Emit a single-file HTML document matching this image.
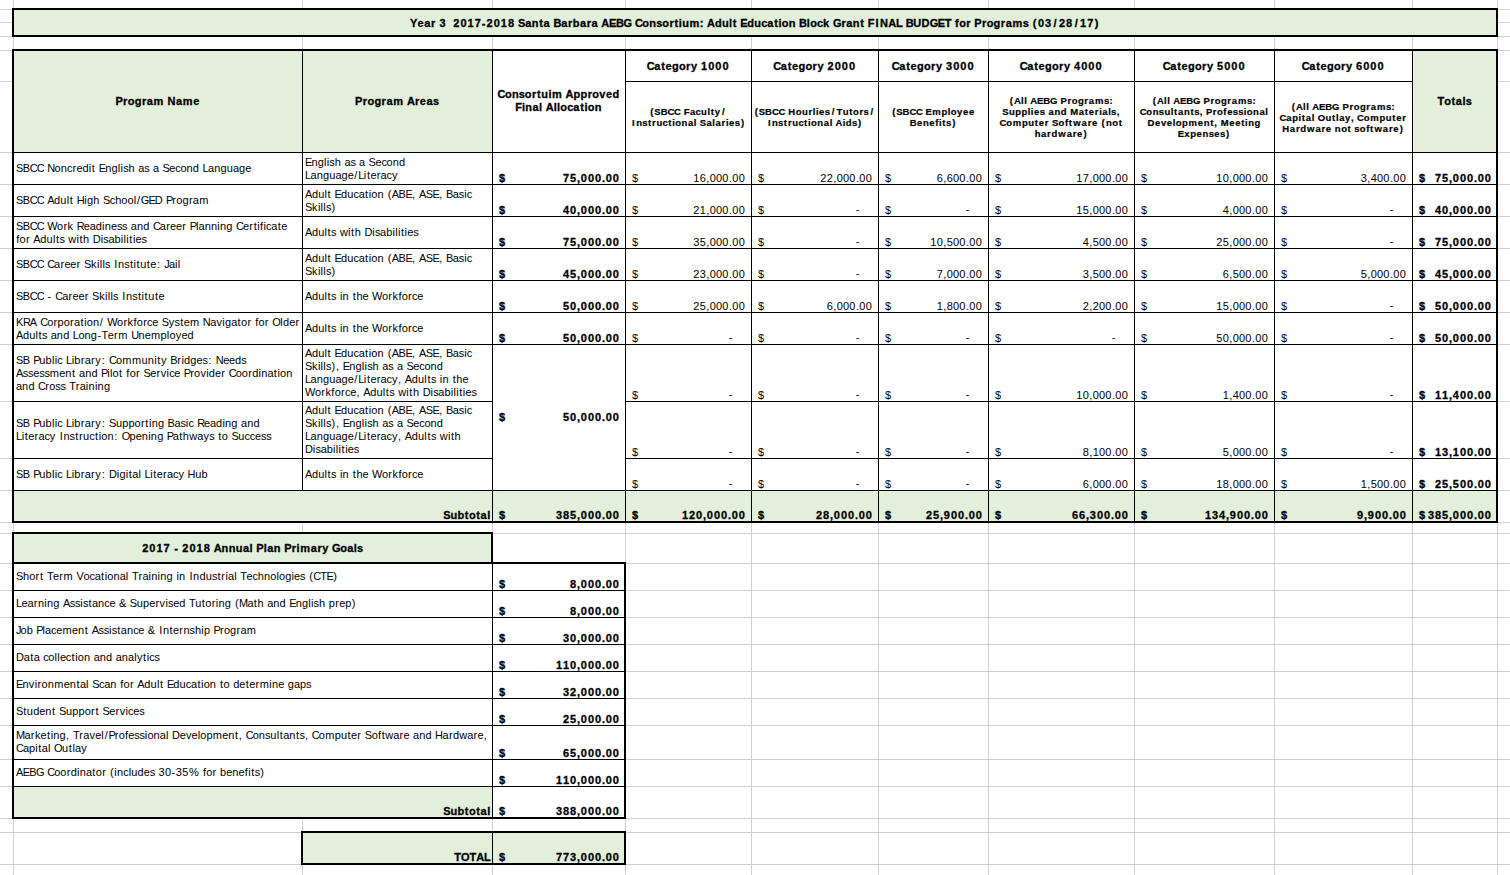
<!DOCTYPE html>
<html><head><meta charset="utf-8"><title>AEBG Budget</title>
<style>
html,body{margin:0;padding:0;background:#fff;}
body{width:1510px;height:875px;position:relative;overflow:hidden;font-family:"Liberation Sans",sans-serif;color:#000;}
body>div{position:absolute;white-space:pre;}
i{display:inline-block;text-align:center;font-style:normal}
</style></head><body>
<div style="left:13px;top:0px;width:1px;height:875px;background:#d0d0d0"></div>
<div style="left:302px;top:0px;width:1px;height:875px;background:#d0d0d0"></div>
<div style="left:492px;top:0px;width:1px;height:875px;background:#d0d0d0"></div>
<div style="left:625px;top:0px;width:1px;height:875px;background:#d0d0d0"></div>
<div style="left:751px;top:0px;width:1px;height:875px;background:#d0d0d0"></div>
<div style="left:878px;top:0px;width:1px;height:875px;background:#d0d0d0"></div>
<div style="left:988px;top:0px;width:1px;height:875px;background:#d0d0d0"></div>
<div style="left:1134px;top:0px;width:1px;height:875px;background:#d0d0d0"></div>
<div style="left:1274px;top:0px;width:1px;height:875px;background:#d0d0d0"></div>
<div style="left:1412px;top:0px;width:1px;height:875px;background:#d0d0d0"></div>
<div style="left:1497px;top:0px;width:1px;height:875px;background:#d0d0d0"></div>
<div style="left:0px;top:9px;width:1510px;height:1px;background:#d0d0d0"></div>
<div style="left:0px;top:22px;width:1510px;height:1px;background:#d0d0d0"></div>
<div style="left:0px;top:36px;width:1510px;height:1px;background:#d0d0d0"></div>
<div style="left:0px;top:50px;width:1510px;height:1px;background:#d0d0d0"></div>
<div style="left:0px;top:81px;width:1510px;height:1px;background:#d0d0d0"></div>
<div style="left:0px;top:152px;width:1510px;height:1px;background:#d0d0d0"></div>
<div style="left:0px;top:184px;width:1510px;height:1px;background:#d0d0d0"></div>
<div style="left:0px;top:216px;width:1510px;height:1px;background:#d0d0d0"></div>
<div style="left:0px;top:248px;width:1510px;height:1px;background:#d0d0d0"></div>
<div style="left:0px;top:280px;width:1510px;height:1px;background:#d0d0d0"></div>
<div style="left:0px;top:312px;width:1510px;height:1px;background:#d0d0d0"></div>
<div style="left:0px;top:344px;width:1510px;height:1px;background:#d0d0d0"></div>
<div style="left:0px;top:401px;width:1510px;height:1px;background:#d0d0d0"></div>
<div style="left:0px;top:458px;width:1510px;height:1px;background:#d0d0d0"></div>
<div style="left:0px;top:490px;width:1510px;height:1px;background:#d0d0d0"></div>
<div style="left:0px;top:522px;width:1510px;height:1px;background:#d0d0d0"></div>
<div style="left:0px;top:533px;width:1510px;height:1px;background:#d0d0d0"></div>
<div style="left:0px;top:563px;width:1510px;height:1px;background:#d0d0d0"></div>
<div style="left:0px;top:590px;width:1510px;height:1px;background:#d0d0d0"></div>
<div style="left:0px;top:617px;width:1510px;height:1px;background:#d0d0d0"></div>
<div style="left:0px;top:644px;width:1510px;height:1px;background:#d0d0d0"></div>
<div style="left:0px;top:671px;width:1510px;height:1px;background:#d0d0d0"></div>
<div style="left:0px;top:698px;width:1510px;height:1px;background:#d0d0d0"></div>
<div style="left:0px;top:725px;width:1510px;height:1px;background:#d0d0d0"></div>
<div style="left:0px;top:759px;width:1510px;height:1px;background:#d0d0d0"></div>
<div style="left:0px;top:786px;width:1510px;height:1px;background:#d0d0d0"></div>
<div style="left:0px;top:818px;width:1510px;height:1px;background:#d0d0d0"></div>
<div style="left:0px;top:832px;width:1510px;height:1px;background:#d0d0d0"></div>
<div style="left:0px;top:864px;width:1510px;height:1px;background:#d0d0d0"></div>
<div style="left:14px;top:10px;width:1483px;height:26px;background:#e2efda"></div>
<div style="left:14px;top:51px;width:288px;height:101px;background:#e2efda"></div>
<div style="left:303px;top:51px;width:189px;height:101px;background:#e2efda"></div>
<div style="left:493px;top:51px;width:132px;height:101px;background:#fff"></div>
<div style="left:1413px;top:51px;width:84px;height:101px;background:#e2efda"></div>
<div style="left:626px;top:51px;width:125px;height:30px;background:#fff"></div>
<div style="left:626px;top:82px;width:125px;height:70px;background:#fff"></div>
<div style="left:752px;top:51px;width:126px;height:30px;background:#fff"></div>
<div style="left:752px;top:82px;width:126px;height:70px;background:#fff"></div>
<div style="left:879px;top:51px;width:109px;height:30px;background:#fff"></div>
<div style="left:879px;top:82px;width:109px;height:70px;background:#fff"></div>
<div style="left:989px;top:51px;width:145px;height:30px;background:#fff"></div>
<div style="left:989px;top:82px;width:145px;height:70px;background:#fff"></div>
<div style="left:1135px;top:51px;width:139px;height:30px;background:#fff"></div>
<div style="left:1135px;top:82px;width:139px;height:70px;background:#fff"></div>
<div style="left:1275px;top:51px;width:137px;height:30px;background:#fff"></div>
<div style="left:1275px;top:82px;width:137px;height:70px;background:#fff"></div>
<div style="left:493px;top:345px;width:132px;height:145px;background:#fff"></div>
<div style="left:14px;top:491px;width:1483px;height:31px;background:#e2efda"></div>
<div style="left:14px;top:534px;width:478px;height:29px;background:#e2efda"></div>
<div style="left:14px;top:564px;width:478px;height:26px;background:#fff"></div>
<div style="left:14px;top:591px;width:478px;height:26px;background:#fff"></div>
<div style="left:14px;top:618px;width:478px;height:26px;background:#fff"></div>
<div style="left:14px;top:645px;width:478px;height:26px;background:#fff"></div>
<div style="left:14px;top:672px;width:478px;height:26px;background:#fff"></div>
<div style="left:14px;top:699px;width:478px;height:26px;background:#fff"></div>
<div style="left:14px;top:726px;width:478px;height:33px;background:#fff"></div>
<div style="left:14px;top:760px;width:478px;height:26px;background:#fff"></div>
<div style="left:14px;top:787px;width:478px;height:31px;background:#e2efda"></div>
<div style="left:303px;top:833px;width:322px;height:31px;background:#e2efda"></div>
<div style="left:625px;top:81px;width:788px;height:1px;background:#000"></div>
<div style="left:13px;top:152px;width:1485px;height:1px;background:#000"></div>
<div style="left:13px;top:184px;width:1485px;height:1px;background:#000"></div>
<div style="left:13px;top:216px;width:1485px;height:1px;background:#000"></div>
<div style="left:13px;top:248px;width:1485px;height:1px;background:#000"></div>
<div style="left:13px;top:280px;width:1485px;height:1px;background:#000"></div>
<div style="left:13px;top:312px;width:1485px;height:1px;background:#000"></div>
<div style="left:13px;top:344px;width:1485px;height:1px;background:#000"></div>
<div style="left:13px;top:401px;width:1485px;height:1px;background:#000"></div>
<div style="left:13px;top:458px;width:1485px;height:1px;background:#000"></div>
<div style="left:13px;top:490px;width:1485px;height:1px;background:#000"></div>
<div style="left:302px;top:50px;width:1px;height:441px;background:#000"></div>
<div style="left:492px;top:50px;width:1px;height:473px;background:#000"></div>
<div style="left:625px;top:50px;width:1px;height:473px;background:#000"></div>
<div style="left:751px;top:50px;width:1px;height:473px;background:#000"></div>
<div style="left:878px;top:50px;width:1px;height:473px;background:#000"></div>
<div style="left:988px;top:50px;width:1px;height:473px;background:#000"></div>
<div style="left:1134px;top:50px;width:1px;height:473px;background:#000"></div>
<div style="left:1274px;top:50px;width:1px;height:473px;background:#000"></div>
<div style="left:1412px;top:50px;width:1px;height:473px;background:#000"></div>
<div style="left:12px;top:49px;width:1486px;height:2px;background:#000"></div>
<div style="left:12px;top:521px;width:1486px;height:2px;background:#000"></div>
<div style="left:12px;top:49px;width:2px;height:474px;background:#000"></div>
<div style="left:1496px;top:49px;width:2px;height:474px;background:#000"></div>
<div style="left:12px;top:8px;width:1486px;height:2px;background:#000"></div>
<div style="left:12px;top:35px;width:1486px;height:2px;background:#000"></div>
<div style="left:12px;top:8px;width:2px;height:29px;background:#000"></div>
<div style="left:1496px;top:8px;width:2px;height:29px;background:#000"></div>
<div style="left:493px;top:401px;width:132px;height:1px;background:#fff"></div>
<div style="left:493px;top:458px;width:132px;height:1px;background:#fff"></div>
<div style="left:13px;top:590px;width:613px;height:1px;background:#000"></div>
<div style="left:13px;top:617px;width:613px;height:1px;background:#000"></div>
<div style="left:13px;top:644px;width:613px;height:1px;background:#000"></div>
<div style="left:13px;top:671px;width:613px;height:1px;background:#000"></div>
<div style="left:13px;top:698px;width:613px;height:1px;background:#000"></div>
<div style="left:13px;top:725px;width:613px;height:1px;background:#000"></div>
<div style="left:13px;top:759px;width:613px;height:1px;background:#000"></div>
<div style="left:13px;top:786px;width:613px;height:1px;background:#000"></div>
<div style="left:492px;top:563px;width:1px;height:256px;background:#000"></div>
<div style="left:12px;top:532px;width:481px;height:2px;background:#000"></div>
<div style="left:12px;top:562px;width:481px;height:2px;background:#000"></div>
<div style="left:12px;top:532px;width:2px;height:32px;background:#000"></div>
<div style="left:491px;top:532px;width:2px;height:32px;background:#000"></div>
<div style="left:12px;top:562px;width:614px;height:2px;background:#000"></div>
<div style="left:12px;top:817px;width:614px;height:2px;background:#000"></div>
<div style="left:12px;top:562px;width:2px;height:257px;background:#000"></div>
<div style="left:624px;top:562px;width:2px;height:257px;background:#000"></div>
<div style="left:492px;top:832px;width:1px;height:33px;background:#000"></div>
<div style="left:301px;top:831px;width:325px;height:2px;background:#000"></div>
<div style="left:301px;top:863px;width:325px;height:2px;background:#000"></div>
<div style="left:301px;top:831px;width:2px;height:34px;background:#000"></div>
<div style="left:624px;top:831px;width:2px;height:34px;background:#000"></div>
<div style="left:409.89px;top:17px;line-height:13px;font-weight:bold;font-size:11px;-webkit-text-stroke:0.3px #000"><i style="width:7.37px">Y</i><i style="width:6.64px">e</i><i style="width:6.68px">a</i><i style="width:4.97px">r</i><i style="width:3.42px"> </i><i style="width:7.11px">3</i><i style="width:3.42px"> </i><i style="width:3.42px"> </i><i style="width:7.11px">2</i><i style="width:7.11px">0</i><i style="width:7.11px">1</i><i style="width:7.11px">7</i><i style="width:4.80px">-</i><i style="width:7.11px">2</i><i style="width:7.11px">0</i><i style="width:7.11px">1</i><i style="width:7.11px">8</i><i style="width:3.42px"> </i><i style="width:7.10px">S</i><i style="width:6.68px">a</i><i style="width:7.12px">n</i><i style="width:4.56px">t</i><i style="width:6.68px">a</i><i style="width:3.42px"> </i><i style="width:7.62px">B</i><i style="width:6.68px">a</i><i style="width:4.97px">r</i><i style="width:6.99px">b</i><i style="width:6.68px">a</i><i style="width:4.97px">r</i><i style="width:6.68px">a</i><i style="width:3.42px"> </i><i style="width:7.76px">A</i><i style="width:6.83px">E</i><i style="width:7.62px">B</i><i style="width:8.11px">G</i><i style="width:3.42px"> </i><i style="width:7.24px">C</i><i style="width:6.87px">o</i><i style="width:7.12px">n</i><i style="width:5.93px">s</i><i style="width:6.87px">o</i><i style="width:4.97px">r</i><i style="width:4.56px">t</i><i style="width:3.42px">i</i><i style="width:7.12px">u</i><i style="width:10.58px">m</i><i style="width:4.02px">:</i><i style="width:3.42px"> </i><i style="width:7.76px">A</i><i style="width:6.99px">d</i><i style="width:7.12px">u</i><i style="width:3.42px">l</i><i style="width:4.56px">t</i><i style="width:3.42px"> </i><i style="width:6.83px">E</i><i style="width:6.99px">d</i><i style="width:7.12px">u</i><i style="width:5.88px">c</i><i style="width:6.68px">a</i><i style="width:4.56px">t</i><i style="width:3.42px">i</i><i style="width:6.87px">o</i><i style="width:7.12px">n</i><i style="width:3.42px"> </i><i style="width:7.62px">B</i><i style="width:3.42px">l</i><i style="width:6.87px">o</i><i style="width:5.88px">c</i><i style="width:6.70px">k</i><i style="width:3.42px"> </i><i style="width:8.11px">G</i><i style="width:4.97px">r</i><i style="width:6.68px">a</i><i style="width:7.12px">n</i><i style="width:4.56px">t</i><i style="width:3.42px"> </i><i style="width:6.50px">F</i><i style="width:5.46px">I</i><i style="width:8.47px">N</i><i style="width:7.76px">A</i><i style="width:6.37px">L</i><i style="width:3.42px"> </i><i style="width:7.62px">B</i><i style="width:8.12px">U</i><i style="width:8.30px">D</i><i style="width:8.11px">G</i><i style="width:6.83px">E</i><i style="width:6.82px">T</i><i style="width:3.42px"> </i><i style="width:4.22px">f</i><i style="width:6.87px">o</i><i style="width:4.97px">r</i><i style="width:3.42px"> </i><i style="width:7.33px">P</i><i style="width:4.97px">r</i><i style="width:6.87px">o</i><i style="width:6.99px">g</i><i style="width:4.97px">r</i><i style="width:6.68px">a</i><i style="width:10.58px">m</i><i style="width:5.93px">s</i><i style="width:3.42px"> </i><i style="width:5.43px">(</i><i style="width:7.11px">0</i><i style="width:7.11px">3</i><i style="width:6.89px">/</i><i style="width:7.11px">2</i><i style="width:7.11px">8</i><i style="width:6.89px">/</i><i style="width:7.11px">1</i><i style="width:7.11px">7</i><i style="width:5.43px">)</i></div>
<div style="left:115.41px;top:95px;line-height:13px;font-weight:bold;font-size:11px;-webkit-text-stroke:0.3px #000"><i style="width:7.33px">P</i><i style="width:4.97px">r</i><i style="width:6.87px">o</i><i style="width:6.99px">g</i><i style="width:4.97px">r</i><i style="width:6.68px">a</i><i style="width:10.58px">m</i><i style="width:3.42px"> </i><i style="width:8.47px">N</i><i style="width:6.68px">a</i><i style="width:10.58px">m</i><i style="width:6.64px">e</i></div>
<div style="left:355.11px;top:95px;line-height:13px;font-weight:bold;font-size:11px;-webkit-text-stroke:0.3px #000"><i style="width:7.33px">P</i><i style="width:4.97px">r</i><i style="width:6.87px">o</i><i style="width:6.99px">g</i><i style="width:4.97px">r</i><i style="width:6.68px">a</i><i style="width:10.58px">m</i><i style="width:3.42px"> </i><i style="width:7.76px">A</i><i style="width:4.97px">r</i><i style="width:6.64px">e</i><i style="width:6.68px">a</i><i style="width:5.93px">s</i></div>
<div style="left:497.60px;top:88px;line-height:13px;font-weight:bold;font-size:11px;-webkit-text-stroke:0.3px #000"><i style="width:7.24px">C</i><i style="width:6.87px">o</i><i style="width:7.12px">n</i><i style="width:5.93px">s</i><i style="width:6.87px">o</i><i style="width:4.97px">r</i><i style="width:4.56px">t</i><i style="width:7.12px">u</i><i style="width:3.42px">i</i><i style="width:10.58px">m</i><i style="width:3.42px"> </i><i style="width:7.76px">A</i><i style="width:6.99px">p</i><i style="width:6.99px">p</i><i style="width:4.97px">r</i><i style="width:6.87px">o</i><i style="width:6.50px">v</i><i style="width:6.64px">e</i><i style="width:6.99px">d</i></div>
<div style="left:515.22px;top:101px;line-height:13px;font-weight:bold;font-size:11px;-webkit-text-stroke:0.3px #000"><i style="width:6.50px">F</i><i style="width:3.42px">i</i><i style="width:7.12px">n</i><i style="width:6.68px">a</i><i style="width:3.42px">l</i><i style="width:3.42px"> </i><i style="width:7.76px">A</i><i style="width:3.42px">l</i><i style="width:3.42px">l</i><i style="width:6.87px">o</i><i style="width:5.88px">c</i><i style="width:6.68px">a</i><i style="width:4.56px">t</i><i style="width:3.42px">i</i><i style="width:6.87px">o</i><i style="width:7.12px">n</i></div>
<div style="left:1437.36px;top:95px;line-height:13px;font-weight:bold;font-size:11px;-webkit-text-stroke:0.3px #000"><i style="width:6.82px">T</i><i style="width:6.87px">o</i><i style="width:4.56px">t</i><i style="width:6.68px">a</i><i style="width:3.42px">l</i><i style="width:5.93px">s</i></div>
<div style="left:646.84px;top:60px;line-height:13px;font-weight:bold;font-size:11px;-webkit-text-stroke:0.3px #000"><i style="width:7.24px">C</i><i style="width:6.68px">a</i><i style="width:4.56px">t</i><i style="width:6.64px">e</i><i style="width:6.99px">g</i><i style="width:6.87px">o</i><i style="width:4.97px">r</i><i style="width:6.51px">y</i><i style="width:3.42px"> </i><i style="width:7.11px">1</i><i style="width:7.11px">0</i><i style="width:7.11px">0</i><i style="width:7.11px">0</i></div>
<div style="left:649.48px;top:106px;line-height:11px;font-weight:bold;font-size:9.5px;-webkit-text-stroke:0.2px #000"><i style="width:4.89px">(</i><i style="width:6.39px">S</i><i style="width:6.86px">B</i><i style="width:6.52px">C</i><i style="width:6.52px">C</i><i style="width:3.08px"> </i><i style="width:5.85px">F</i><i style="width:6.01px">a</i><i style="width:5.29px">c</i><i style="width:6.41px">u</i><i style="width:3.08px">l</i><i style="width:4.10px">t</i><i style="width:5.86px">y</i><i style="width:6.20px">/</i></div>
<div style="left:630.94px;top:117px;line-height:11px;font-weight:bold;font-size:9.5px;-webkit-text-stroke:0.2px #000"><i style="width:4.91px">I</i><i style="width:6.41px">n</i><i style="width:5.34px">s</i><i style="width:4.10px">t</i><i style="width:4.47px">r</i><i style="width:6.41px">u</i><i style="width:5.29px">c</i><i style="width:4.10px">t</i><i style="width:3.08px">i</i><i style="width:6.18px">o</i><i style="width:6.41px">n</i><i style="width:6.01px">a</i><i style="width:3.08px">l</i><i style="width:3.08px"> </i><i style="width:6.39px">S</i><i style="width:6.01px">a</i><i style="width:3.08px">l</i><i style="width:6.01px">a</i><i style="width:4.47px">r</i><i style="width:3.08px">i</i><i style="width:5.98px">e</i><i style="width:5.34px">s</i><i style="width:4.89px">)</i></div>
<div style="left:773.34px;top:60px;line-height:13px;font-weight:bold;font-size:11px;-webkit-text-stroke:0.3px #000"><i style="width:7.24px">C</i><i style="width:6.68px">a</i><i style="width:4.56px">t</i><i style="width:6.64px">e</i><i style="width:6.99px">g</i><i style="width:6.87px">o</i><i style="width:4.97px">r</i><i style="width:6.51px">y</i><i style="width:3.42px"> </i><i style="width:7.11px">2</i><i style="width:7.11px">0</i><i style="width:7.11px">0</i><i style="width:7.11px">0</i></div>
<div style="left:753.82px;top:106px;line-height:11px;font-weight:bold;font-size:9.5px;-webkit-text-stroke:0.2px #000"><i style="width:4.89px">(</i><i style="width:6.39px">S</i><i style="width:6.86px">B</i><i style="width:6.52px">C</i><i style="width:6.52px">C</i><i style="width:3.08px"> </i><i style="width:7.53px">H</i><i style="width:6.18px">o</i><i style="width:6.41px">u</i><i style="width:4.47px">r</i><i style="width:3.08px">l</i><i style="width:3.08px">i</i><i style="width:5.98px">e</i><i style="width:5.34px">s</i><i style="width:6.20px">/</i><i style="width:6.14px">T</i><i style="width:6.41px">u</i><i style="width:4.10px">t</i><i style="width:6.18px">o</i><i style="width:4.47px">r</i><i style="width:5.34px">s</i><i style="width:6.20px">/</i></div>
<div style="left:766.77px;top:117px;line-height:11px;font-weight:bold;font-size:9.5px;-webkit-text-stroke:0.2px #000"><i style="width:4.91px">I</i><i style="width:6.41px">n</i><i style="width:5.34px">s</i><i style="width:4.10px">t</i><i style="width:4.47px">r</i><i style="width:6.41px">u</i><i style="width:5.29px">c</i><i style="width:4.10px">t</i><i style="width:3.08px">i</i><i style="width:6.18px">o</i><i style="width:6.41px">n</i><i style="width:6.01px">a</i><i style="width:3.08px">l</i><i style="width:3.08px"> </i><i style="width:6.98px">A</i><i style="width:3.08px">i</i><i style="width:6.29px">d</i><i style="width:5.34px">s</i><i style="width:4.89px">)</i></div>
<div style="left:891.84px;top:60px;line-height:13px;font-weight:bold;font-size:11px;-webkit-text-stroke:0.3px #000"><i style="width:7.24px">C</i><i style="width:6.68px">a</i><i style="width:4.56px">t</i><i style="width:6.64px">e</i><i style="width:6.99px">g</i><i style="width:6.87px">o</i><i style="width:4.97px">r</i><i style="width:6.51px">y</i><i style="width:3.42px"> </i><i style="width:7.11px">3</i><i style="width:7.11px">0</i><i style="width:7.11px">0</i><i style="width:7.11px">0</i></div>
<div style="left:891.36px;top:106px;line-height:11px;font-weight:bold;font-size:9.5px;-webkit-text-stroke:0.2px #000"><i style="width:4.89px">(</i><i style="width:6.39px">S</i><i style="width:6.86px">B</i><i style="width:6.52px">C</i><i style="width:6.52px">C</i><i style="width:3.08px"> </i><i style="width:6.15px">E</i><i style="width:9.52px">m</i><i style="width:6.29px">p</i><i style="width:3.08px">l</i><i style="width:6.18px">o</i><i style="width:5.86px">y</i><i style="width:5.98px">e</i><i style="width:5.98px">e</i></div>
<div style="left:909.79px;top:117px;line-height:11px;font-weight:bold;font-size:9.5px;-webkit-text-stroke:0.2px #000"><i style="width:6.86px">B</i><i style="width:5.98px">e</i><i style="width:6.41px">n</i><i style="width:5.98px">e</i><i style="width:3.80px">f</i><i style="width:3.08px">i</i><i style="width:4.10px">t</i><i style="width:5.34px">s</i><i style="width:4.89px">)</i></div>
<div style="left:1019.84px;top:60px;line-height:13px;font-weight:bold;font-size:11px;-webkit-text-stroke:0.3px #000"><i style="width:7.24px">C</i><i style="width:6.68px">a</i><i style="width:4.56px">t</i><i style="width:6.64px">e</i><i style="width:6.99px">g</i><i style="width:6.87px">o</i><i style="width:4.97px">r</i><i style="width:6.51px">y</i><i style="width:3.42px"> </i><i style="width:7.11px">4</i><i style="width:7.11px">0</i><i style="width:7.11px">0</i><i style="width:7.11px">0</i></div>
<div style="left:1009.01px;top:95px;line-height:11px;font-weight:bold;font-size:9.5px;-webkit-text-stroke:0.2px #000"><i style="width:4.89px">(</i><i style="width:6.98px">A</i><i style="width:3.08px">l</i><i style="width:3.08px">l</i><i style="width:3.08px"> </i><i style="width:6.98px">A</i><i style="width:6.15px">E</i><i style="width:6.86px">B</i><i style="width:7.30px">G</i><i style="width:3.08px"> </i><i style="width:6.60px">P</i><i style="width:4.47px">r</i><i style="width:6.18px">o</i><i style="width:6.29px">g</i><i style="width:4.47px">r</i><i style="width:6.01px">a</i><i style="width:9.52px">m</i><i style="width:5.34px">s</i><i style="width:3.62px">:</i></div>
<div style="left:1002.22px;top:106px;line-height:11px;font-weight:bold;font-size:9.5px;-webkit-text-stroke:0.2px #000"><i style="width:6.39px">S</i><i style="width:6.41px">u</i><i style="width:6.29px">p</i><i style="width:6.29px">p</i><i style="width:3.08px">l</i><i style="width:3.08px">i</i><i style="width:5.98px">e</i><i style="width:5.34px">s</i><i style="width:3.08px"> </i><i style="width:6.01px">a</i><i style="width:6.41px">n</i><i style="width:6.29px">d</i><i style="width:3.08px"> </i><i style="width:8.53px">M</i><i style="width:6.01px">a</i><i style="width:4.10px">t</i><i style="width:5.98px">e</i><i style="width:4.47px">r</i><i style="width:3.08px">i</i><i style="width:6.01px">a</i><i style="width:3.08px">l</i><i style="width:5.34px">s</i><i style="width:3.25px">,</i></div>
<div style="left:999.52px;top:117px;line-height:11px;font-weight:bold;font-size:9.5px;-webkit-text-stroke:0.2px #000"><i style="width:6.52px">C</i><i style="width:6.18px">o</i><i style="width:9.52px">m</i><i style="width:6.29px">p</i><i style="width:6.41px">u</i><i style="width:4.10px">t</i><i style="width:5.98px">e</i><i style="width:4.47px">r</i><i style="width:3.08px"> </i><i style="width:6.39px">S</i><i style="width:6.18px">o</i><i style="width:3.80px">f</i><i style="width:4.10px">t</i><i style="width:8.81px">w</i><i style="width:6.01px">a</i><i style="width:4.47px">r</i><i style="width:5.98px">e</i><i style="width:3.08px"> </i><i style="width:4.89px">(</i><i style="width:6.41px">n</i><i style="width:6.18px">o</i><i style="width:4.10px">t</i></div>
<div style="left:1034.33px;top:128px;line-height:11px;font-weight:bold;font-size:9.5px;-webkit-text-stroke:0.2px #000"><i style="width:6.41px">h</i><i style="width:6.01px">a</i><i style="width:4.47px">r</i><i style="width:6.29px">d</i><i style="width:8.81px">w</i><i style="width:6.01px">a</i><i style="width:4.47px">r</i><i style="width:5.98px">e</i><i style="width:4.89px">)</i></div>
<div style="left:1162.84px;top:60px;line-height:13px;font-weight:bold;font-size:11px;-webkit-text-stroke:0.3px #000"><i style="width:7.24px">C</i><i style="width:6.68px">a</i><i style="width:4.56px">t</i><i style="width:6.64px">e</i><i style="width:6.99px">g</i><i style="width:6.87px">o</i><i style="width:4.97px">r</i><i style="width:6.51px">y</i><i style="width:3.42px"> </i><i style="width:7.11px">5</i><i style="width:7.11px">0</i><i style="width:7.11px">0</i><i style="width:7.11px">0</i></div>
<div style="left:1152.01px;top:95px;line-height:11px;font-weight:bold;font-size:9.5px;-webkit-text-stroke:0.2px #000"><i style="width:4.89px">(</i><i style="width:6.98px">A</i><i style="width:3.08px">l</i><i style="width:3.08px">l</i><i style="width:3.08px"> </i><i style="width:6.98px">A</i><i style="width:6.15px">E</i><i style="width:6.86px">B</i><i style="width:7.30px">G</i><i style="width:3.08px"> </i><i style="width:6.60px">P</i><i style="width:4.47px">r</i><i style="width:6.18px">o</i><i style="width:6.29px">g</i><i style="width:4.47px">r</i><i style="width:6.01px">a</i><i style="width:9.52px">m</i><i style="width:5.34px">s</i><i style="width:3.62px">:</i></div>
<div style="left:1139.66px;top:106px;line-height:11px;font-weight:bold;font-size:9.5px;-webkit-text-stroke:0.2px #000"><i style="width:6.52px">C</i><i style="width:6.18px">o</i><i style="width:6.41px">n</i><i style="width:5.34px">s</i><i style="width:6.41px">u</i><i style="width:3.08px">l</i><i style="width:4.10px">t</i><i style="width:6.01px">a</i><i style="width:6.41px">n</i><i style="width:4.10px">t</i><i style="width:5.34px">s</i><i style="width:3.25px">,</i><i style="width:3.08px"> </i><i style="width:6.60px">P</i><i style="width:4.47px">r</i><i style="width:6.18px">o</i><i style="width:3.80px">f</i><i style="width:5.98px">e</i><i style="width:5.34px">s</i><i style="width:5.34px">s</i><i style="width:3.08px">i</i><i style="width:6.18px">o</i><i style="width:6.41px">n</i><i style="width:6.01px">a</i><i style="width:3.08px">l</i></div>
<div style="left:1147.24px;top:117px;line-height:11px;font-weight:bold;font-size:9.5px;-webkit-text-stroke:0.2px #000"><i style="width:7.47px">D</i><i style="width:5.98px">e</i><i style="width:5.85px">v</i><i style="width:5.98px">e</i><i style="width:3.08px">l</i><i style="width:6.18px">o</i><i style="width:6.29px">p</i><i style="width:9.52px">m</i><i style="width:5.98px">e</i><i style="width:6.41px">n</i><i style="width:4.10px">t</i><i style="width:3.25px">,</i><i style="width:3.08px"> </i><i style="width:8.53px">M</i><i style="width:5.98px">e</i><i style="width:5.98px">e</i><i style="width:4.10px">t</i><i style="width:3.08px">i</i><i style="width:6.41px">n</i><i style="width:6.29px">g</i></div>
<div style="left:1177.81px;top:128px;line-height:11px;font-weight:bold;font-size:9.5px;-webkit-text-stroke:0.2px #000"><i style="width:6.15px">E</i><i style="width:6.02px">x</i><i style="width:6.29px">p</i><i style="width:5.98px">e</i><i style="width:6.41px">n</i><i style="width:5.34px">s</i><i style="width:5.98px">e</i><i style="width:5.34px">s</i><i style="width:4.89px">)</i></div>
<div style="left:1301.84px;top:60px;line-height:13px;font-weight:bold;font-size:11px;-webkit-text-stroke:0.3px #000"><i style="width:7.24px">C</i><i style="width:6.68px">a</i><i style="width:4.56px">t</i><i style="width:6.64px">e</i><i style="width:6.99px">g</i><i style="width:6.87px">o</i><i style="width:4.97px">r</i><i style="width:6.51px">y</i><i style="width:3.42px"> </i><i style="width:7.11px">6</i><i style="width:7.11px">0</i><i style="width:7.11px">0</i><i style="width:7.11px">0</i></div>
<div style="left:1291.01px;top:101px;line-height:11px;font-weight:bold;font-size:9.5px;-webkit-text-stroke:0.2px #000"><i style="width:4.89px">(</i><i style="width:6.98px">A</i><i style="width:3.08px">l</i><i style="width:3.08px">l</i><i style="width:3.08px"> </i><i style="width:6.98px">A</i><i style="width:6.15px">E</i><i style="width:6.86px">B</i><i style="width:7.30px">G</i><i style="width:3.08px"> </i><i style="width:6.60px">P</i><i style="width:4.47px">r</i><i style="width:6.18px">o</i><i style="width:6.29px">g</i><i style="width:4.47px">r</i><i style="width:6.01px">a</i><i style="width:9.52px">m</i><i style="width:5.34px">s</i><i style="width:3.62px">:</i></div>
<div style="left:1279.46px;top:112px;line-height:11px;font-weight:bold;font-size:9.5px;-webkit-text-stroke:0.2px #000"><i style="width:6.52px">C</i><i style="width:6.01px">a</i><i style="width:6.29px">p</i><i style="width:3.08px">i</i><i style="width:4.10px">t</i><i style="width:6.01px">a</i><i style="width:3.08px">l</i><i style="width:3.08px"> </i><i style="width:7.65px">O</i><i style="width:6.41px">u</i><i style="width:4.10px">t</i><i style="width:3.08px">l</i><i style="width:6.01px">a</i><i style="width:5.86px">y</i><i style="width:3.25px">,</i><i style="width:3.08px"> </i><i style="width:6.52px">C</i><i style="width:6.18px">o</i><i style="width:9.52px">m</i><i style="width:6.29px">p</i><i style="width:6.41px">u</i><i style="width:4.10px">t</i><i style="width:5.98px">e</i><i style="width:4.47px">r</i></div>
<div style="left:1281.99px;top:123px;line-height:11px;font-weight:bold;font-size:9.5px;-webkit-text-stroke:0.2px #000"><i style="width:7.53px">H</i><i style="width:6.01px">a</i><i style="width:4.47px">r</i><i style="width:6.29px">d</i><i style="width:8.81px">w</i><i style="width:6.01px">a</i><i style="width:4.47px">r</i><i style="width:5.98px">e</i><i style="width:3.08px"> </i><i style="width:6.41px">n</i><i style="width:6.18px">o</i><i style="width:4.10px">t</i><i style="width:3.08px"> </i><i style="width:5.34px">s</i><i style="width:6.18px">o</i><i style="width:3.80px">f</i><i style="width:4.10px">t</i><i style="width:8.81px">w</i><i style="width:6.01px">a</i><i style="width:4.47px">r</i><i style="width:5.98px">e</i><i style="width:4.89px">)</i></div>
<div style="left:16.00px;top:162px;line-height:13px;font-size:11px"><i style="width:6.84px">S</i><i style="width:6.86px">B</i><i style="width:6.98px">C</i><i style="width:6.98px">C</i><i style="width:3.52px"> </i><i style="width:7.48px">N</i><i style="width:6.07px">o</i><i style="width:6.33px">n</i><i style="width:5.21px">c</i><i style="width:4.27px">r</i><i style="width:5.96px">e</i><i style="width:6.23px">d</i><i style="width:2.74px">i</i><i style="width:3.94px">t</i><i style="width:3.52px"> </i><i style="width:6.32px">E</i><i style="width:6.33px">n</i><i style="width:6.23px">g</i><i style="width:2.74px">l</i><i style="width:2.74px">i</i><i style="width:5.21px">s</i><i style="width:6.33px">h</i><i style="width:3.52px"> </i><i style="width:6.01px">a</i><i style="width:5.21px">s</i><i style="width:3.52px"> </i><i style="width:6.01px">a</i><i style="width:3.52px"> </i><i style="width:6.84px">S</i><i style="width:5.96px">e</i><i style="width:5.21px">c</i><i style="width:6.07px">o</i><i style="width:6.33px">n</i><i style="width:6.23px">d</i><i style="width:3.52px"> </i><i style="width:5.57px">L</i><i style="width:6.01px">a</i><i style="width:6.33px">n</i><i style="width:6.23px">g</i><i style="width:6.33px">u</i><i style="width:6.01px">a</i><i style="width:6.23px">g</i><i style="width:5.96px">e</i></div>
<div style="left:305.00px;top:156px;line-height:13px;font-size:11px"><i style="width:6.32px">E</i><i style="width:6.33px">n</i><i style="width:6.23px">g</i><i style="width:2.74px">l</i><i style="width:2.74px">i</i><i style="width:5.21px">s</i><i style="width:6.33px">h</i><i style="width:3.52px"> </i><i style="width:6.01px">a</i><i style="width:5.21px">s</i><i style="width:3.52px"> </i><i style="width:6.01px">a</i><i style="width:3.52px"> </i><i style="width:6.84px">S</i><i style="width:5.96px">e</i><i style="width:5.21px">c</i><i style="width:6.07px">o</i><i style="width:6.33px">n</i><i style="width:6.23px">d</i></div>
<div style="left:305.00px;top:169px;line-height:13px;font-size:11px"><i style="width:5.57px">L</i><i style="width:6.01px">a</i><i style="width:6.33px">n</i><i style="width:6.23px">g</i><i style="width:6.33px">u</i><i style="width:6.01px">a</i><i style="width:6.23px">g</i><i style="width:5.96px">e</i><i style="width:4.54px">/</i><i style="width:5.57px">L</i><i style="width:2.74px">i</i><i style="width:3.94px">t</i><i style="width:5.96px">e</i><i style="width:4.27px">r</i><i style="width:6.01px">a</i><i style="width:5.21px">c</i><i style="width:5.92px">y</i></div>
<div style="left:499.00px;top:172px;line-height:13px;letter-spacing:0.0px;font-weight:bold;font-size:11px;-webkit-text-stroke:0.3px #000">$</div>
<div style="left:562.51px;top:172px;line-height:13px;font-weight:bold;font-size:11px;-webkit-text-stroke:0.3px #000"><i style="width:7.11px">7</i><i style="width:7.11px">5</i><i style="width:3.61px">,</i><i style="width:7.11px">0</i><i style="width:7.11px">0</i><i style="width:7.11px">0</i><i style="width:3.61px">.</i><i style="width:7.11px">0</i><i style="width:7.11px">0</i></div>
<div style="left:632.00px;top:172px;line-height:13px;letter-spacing:0.0px;font-size:11px">$</div>
<div style="left:693.20px;top:172px;line-height:13px;font-size:11px"><i style="width:6.36px">1</i><i style="width:6.36px">6</i><i style="width:3.64px">,</i><i style="width:6.36px">0</i><i style="width:6.36px">0</i><i style="width:6.36px">0</i><i style="width:3.64px">.</i><i style="width:6.36px">0</i><i style="width:6.36px">0</i></div>
<div style="left:758.00px;top:172px;line-height:13px;letter-spacing:0.0px;font-size:11px">$</div>
<div style="left:820.20px;top:172px;line-height:13px;font-size:11px"><i style="width:6.36px">2</i><i style="width:6.36px">2</i><i style="width:3.64px">,</i><i style="width:6.36px">0</i><i style="width:6.36px">0</i><i style="width:6.36px">0</i><i style="width:3.64px">.</i><i style="width:6.36px">0</i><i style="width:6.36px">0</i></div>
<div style="left:885.00px;top:172px;line-height:13px;letter-spacing:0.0px;font-size:11px">$</div>
<div style="left:936.56px;top:172px;line-height:13px;font-size:11px"><i style="width:6.36px">6</i><i style="width:3.64px">,</i><i style="width:6.36px">6</i><i style="width:6.36px">0</i><i style="width:6.36px">0</i><i style="width:3.64px">.</i><i style="width:6.36px">0</i><i style="width:6.36px">0</i></div>
<div style="left:995.00px;top:172px;line-height:13px;letter-spacing:0.0px;font-size:11px">$</div>
<div style="left:1076.20px;top:172px;line-height:13px;font-size:11px"><i style="width:6.36px">1</i><i style="width:6.36px">7</i><i style="width:3.64px">,</i><i style="width:6.36px">0</i><i style="width:6.36px">0</i><i style="width:6.36px">0</i><i style="width:3.64px">.</i><i style="width:6.36px">0</i><i style="width:6.36px">0</i></div>
<div style="left:1141.00px;top:172px;line-height:13px;letter-spacing:0.0px;font-size:11px">$</div>
<div style="left:1216.20px;top:172px;line-height:13px;font-size:11px"><i style="width:6.36px">1</i><i style="width:6.36px">0</i><i style="width:3.64px">,</i><i style="width:6.36px">0</i><i style="width:6.36px">0</i><i style="width:6.36px">0</i><i style="width:3.64px">.</i><i style="width:6.36px">0</i><i style="width:6.36px">0</i></div>
<div style="left:1281.00px;top:172px;line-height:13px;letter-spacing:0.0px;font-size:11px">$</div>
<div style="left:1360.56px;top:172px;line-height:13px;font-size:11px"><i style="width:6.36px">3</i><i style="width:3.64px">,</i><i style="width:6.36px">4</i><i style="width:6.36px">0</i><i style="width:6.36px">0</i><i style="width:3.64px">.</i><i style="width:6.36px">0</i><i style="width:6.36px">0</i></div>
<div style="left:1419.00px;top:172px;line-height:13px;letter-spacing:0.0px;font-weight:bold;font-size:11px;-webkit-text-stroke:0.3px #000">$</div>
<div style="left:1434.51px;top:172px;line-height:13px;font-weight:bold;font-size:11px;-webkit-text-stroke:0.3px #000"><i style="width:7.11px">7</i><i style="width:7.11px">5</i><i style="width:3.61px">,</i><i style="width:7.11px">0</i><i style="width:7.11px">0</i><i style="width:7.11px">0</i><i style="width:3.61px">.</i><i style="width:7.11px">0</i><i style="width:7.11px">0</i></div>
<div style="left:16.00px;top:194px;line-height:13px;font-size:11px"><i style="width:6.84px">S</i><i style="width:6.86px">B</i><i style="width:6.98px">C</i><i style="width:6.98px">C</i><i style="width:3.52px"> </i><i style="width:6.84px">A</i><i style="width:6.23px">d</i><i style="width:6.33px">u</i><i style="width:2.74px">l</i><i style="width:3.94px">t</i><i style="width:3.52px"> </i><i style="width:7.51px">H</i><i style="width:2.74px">i</i><i style="width:6.23px">g</i><i style="width:6.33px">h</i><i style="width:3.52px"> </i><i style="width:6.84px">S</i><i style="width:5.21px">c</i><i style="width:6.33px">h</i><i style="width:6.07px">o</i><i style="width:6.07px">o</i><i style="width:2.74px">l</i><i style="width:4.54px">/</i><i style="width:7.75px">G</i><i style="width:6.32px">E</i><i style="width:7.71px">D</i><i style="width:3.52px"> </i><i style="width:6.03px">P</i><i style="width:4.27px">r</i><i style="width:6.07px">o</i><i style="width:6.23px">g</i><i style="width:4.27px">r</i><i style="width:6.01px">a</i><i style="width:9.73px">m</i></div>
<div style="left:305.00px;top:188px;line-height:13px;font-size:11px"><i style="width:6.84px">A</i><i style="width:6.23px">d</i><i style="width:6.33px">u</i><i style="width:2.74px">l</i><i style="width:3.94px">t</i><i style="width:3.52px"> </i><i style="width:6.32px">E</i><i style="width:6.23px">d</i><i style="width:6.33px">u</i><i style="width:5.21px">c</i><i style="width:6.01px">a</i><i style="width:3.94px">t</i><i style="width:2.74px">i</i><i style="width:6.07px">o</i><i style="width:6.33px">n</i><i style="width:3.52px"> </i><i style="width:4.54px">(</i><i style="width:6.84px">A</i><i style="width:6.86px">B</i><i style="width:6.32px">E</i><i style="width:3.64px">,</i><i style="width:3.52px"> </i><i style="width:6.84px">A</i><i style="width:6.84px">S</i><i style="width:6.32px">E</i><i style="width:3.64px">,</i><i style="width:3.52px"> </i><i style="width:6.86px">B</i><i style="width:6.01px">a</i><i style="width:5.21px">s</i><i style="width:2.74px">i</i><i style="width:5.21px">c</i></div>
<div style="left:305.00px;top:201px;line-height:13px;font-size:11px"><i style="width:6.84px">S</i><i style="width:5.92px">k</i><i style="width:2.74px">i</i><i style="width:2.74px">l</i><i style="width:2.74px">l</i><i style="width:5.21px">s</i><i style="width:4.54px">)</i></div>
<div style="left:499.00px;top:204px;line-height:13px;letter-spacing:0.0px;font-weight:bold;font-size:11px;-webkit-text-stroke:0.3px #000">$</div>
<div style="left:562.51px;top:204px;line-height:13px;font-weight:bold;font-size:11px;-webkit-text-stroke:0.3px #000"><i style="width:7.11px">4</i><i style="width:7.11px">0</i><i style="width:3.61px">,</i><i style="width:7.11px">0</i><i style="width:7.11px">0</i><i style="width:7.11px">0</i><i style="width:3.61px">.</i><i style="width:7.11px">0</i><i style="width:7.11px">0</i></div>
<div style="left:632.00px;top:204px;line-height:13px;letter-spacing:0.0px;font-size:11px">$</div>
<div style="left:693.20px;top:204px;line-height:13px;font-size:11px"><i style="width:6.36px">2</i><i style="width:6.36px">1</i><i style="width:3.64px">,</i><i style="width:6.36px">0</i><i style="width:6.36px">0</i><i style="width:6.36px">0</i><i style="width:3.64px">.</i><i style="width:6.36px">0</i><i style="width:6.36px">0</i></div>
<div style="left:758.00px;top:204px;line-height:13px;letter-spacing:0.0px;font-size:11px">$</div>
<div style="left:855.73px;top:203px;line-height:13px;letter-spacing:0.0px;font-size:11px">-</div>
<div style="left:885.00px;top:204px;line-height:13px;letter-spacing:0.0px;font-size:11px">$</div>
<div style="left:965.73px;top:203px;line-height:13px;letter-spacing:0.0px;font-size:11px">-</div>
<div style="left:995.00px;top:204px;line-height:13px;letter-spacing:0.0px;font-size:11px">$</div>
<div style="left:1076.20px;top:204px;line-height:13px;font-size:11px"><i style="width:6.36px">1</i><i style="width:6.36px">5</i><i style="width:3.64px">,</i><i style="width:6.36px">0</i><i style="width:6.36px">0</i><i style="width:6.36px">0</i><i style="width:3.64px">.</i><i style="width:6.36px">0</i><i style="width:6.36px">0</i></div>
<div style="left:1141.00px;top:204px;line-height:13px;letter-spacing:0.0px;font-size:11px">$</div>
<div style="left:1222.56px;top:204px;line-height:13px;font-size:11px"><i style="width:6.36px">4</i><i style="width:3.64px">,</i><i style="width:6.36px">0</i><i style="width:6.36px">0</i><i style="width:6.36px">0</i><i style="width:3.64px">.</i><i style="width:6.36px">0</i><i style="width:6.36px">0</i></div>
<div style="left:1281.00px;top:204px;line-height:13px;letter-spacing:0.0px;font-size:11px">$</div>
<div style="left:1389.73px;top:203px;line-height:13px;letter-spacing:0.0px;font-size:11px">-</div>
<div style="left:1419.00px;top:204px;line-height:13px;letter-spacing:0.0px;font-weight:bold;font-size:11px;-webkit-text-stroke:0.3px #000">$</div>
<div style="left:1434.51px;top:204px;line-height:13px;font-weight:bold;font-size:11px;-webkit-text-stroke:0.3px #000"><i style="width:7.11px">4</i><i style="width:7.11px">0</i><i style="width:3.61px">,</i><i style="width:7.11px">0</i><i style="width:7.11px">0</i><i style="width:7.11px">0</i><i style="width:3.61px">.</i><i style="width:7.11px">0</i><i style="width:7.11px">0</i></div>
<div style="left:16.00px;top:220px;line-height:13px;font-size:11px"><i style="width:6.84px">S</i><i style="width:6.86px">B</i><i style="width:6.98px">C</i><i style="width:6.98px">C</i><i style="width:3.52px"> </i><i style="width:9.89px">W</i><i style="width:6.07px">o</i><i style="width:4.27px">r</i><i style="width:5.92px">k</i><i style="width:3.52px"> </i><i style="width:6.95px">R</i><i style="width:5.96px">e</i><i style="width:6.01px">a</i><i style="width:6.23px">d</i><i style="width:2.74px">i</i><i style="width:6.33px">n</i><i style="width:5.96px">e</i><i style="width:5.21px">s</i><i style="width:5.21px">s</i><i style="width:3.52px"> </i><i style="width:6.01px">a</i><i style="width:6.33px">n</i><i style="width:6.23px">d</i><i style="width:3.52px"> </i><i style="width:6.98px">C</i><i style="width:6.01px">a</i><i style="width:4.27px">r</i><i style="width:5.96px">e</i><i style="width:5.96px">e</i><i style="width:4.27px">r</i><i style="width:3.52px"> </i><i style="width:6.03px">P</i><i style="width:2.74px">l</i><i style="width:6.01px">a</i><i style="width:6.33px">n</i><i style="width:6.33px">n</i><i style="width:2.74px">i</i><i style="width:6.33px">n</i><i style="width:6.23px">g</i><i style="width:3.52px"> </i><i style="width:6.98px">C</i><i style="width:5.96px">e</i><i style="width:4.27px">r</i><i style="width:3.94px">t</i><i style="width:2.74px">i</i><i style="width:3.52px">f</i><i style="width:2.74px">i</i><i style="width:5.21px">c</i><i style="width:6.01px">a</i><i style="width:3.94px">t</i><i style="width:5.96px">e</i></div>
<div style="left:16.00px;top:233px;line-height:13px;font-size:11px"><i style="width:3.52px">f</i><i style="width:6.07px">o</i><i style="width:4.27px">r</i><i style="width:3.52px"> </i><i style="width:6.84px">A</i><i style="width:6.23px">d</i><i style="width:6.33px">u</i><i style="width:2.74px">l</i><i style="width:3.94px">t</i><i style="width:5.21px">s</i><i style="width:3.52px"> </i><i style="width:8.18px">w</i><i style="width:2.74px">i</i><i style="width:3.94px">t</i><i style="width:6.33px">h</i><i style="width:3.52px"> </i><i style="width:7.71px">D</i><i style="width:2.74px">i</i><i style="width:5.21px">s</i><i style="width:6.01px">a</i><i style="width:6.23px">b</i><i style="width:2.74px">i</i><i style="width:2.74px">l</i><i style="width:2.74px">i</i><i style="width:3.94px">t</i><i style="width:2.74px">i</i><i style="width:5.96px">e</i><i style="width:5.21px">s</i></div>
<div style="left:305.00px;top:226px;line-height:13px;font-size:11px"><i style="width:6.84px">A</i><i style="width:6.23px">d</i><i style="width:6.33px">u</i><i style="width:2.74px">l</i><i style="width:3.94px">t</i><i style="width:5.21px">s</i><i style="width:3.52px"> </i><i style="width:8.18px">w</i><i style="width:2.74px">i</i><i style="width:3.94px">t</i><i style="width:6.33px">h</i><i style="width:3.52px"> </i><i style="width:7.71px">D</i><i style="width:2.74px">i</i><i style="width:5.21px">s</i><i style="width:6.01px">a</i><i style="width:6.23px">b</i><i style="width:2.74px">i</i><i style="width:2.74px">l</i><i style="width:2.74px">i</i><i style="width:3.94px">t</i><i style="width:2.74px">i</i><i style="width:5.96px">e</i><i style="width:5.21px">s</i></div>
<div style="left:499.00px;top:236px;line-height:13px;letter-spacing:0.0px;font-weight:bold;font-size:11px;-webkit-text-stroke:0.3px #000">$</div>
<div style="left:562.51px;top:236px;line-height:13px;font-weight:bold;font-size:11px;-webkit-text-stroke:0.3px #000"><i style="width:7.11px">7</i><i style="width:7.11px">5</i><i style="width:3.61px">,</i><i style="width:7.11px">0</i><i style="width:7.11px">0</i><i style="width:7.11px">0</i><i style="width:3.61px">.</i><i style="width:7.11px">0</i><i style="width:7.11px">0</i></div>
<div style="left:632.00px;top:236px;line-height:13px;letter-spacing:0.0px;font-size:11px">$</div>
<div style="left:693.20px;top:236px;line-height:13px;font-size:11px"><i style="width:6.36px">3</i><i style="width:6.36px">5</i><i style="width:3.64px">,</i><i style="width:6.36px">0</i><i style="width:6.36px">0</i><i style="width:6.36px">0</i><i style="width:3.64px">.</i><i style="width:6.36px">0</i><i style="width:6.36px">0</i></div>
<div style="left:758.00px;top:236px;line-height:13px;letter-spacing:0.0px;font-size:11px">$</div>
<div style="left:855.73px;top:235px;line-height:13px;letter-spacing:0.0px;font-size:11px">-</div>
<div style="left:885.00px;top:236px;line-height:13px;letter-spacing:0.0px;font-size:11px">$</div>
<div style="left:930.20px;top:236px;line-height:13px;font-size:11px"><i style="width:6.36px">1</i><i style="width:6.36px">0</i><i style="width:3.64px">,</i><i style="width:6.36px">5</i><i style="width:6.36px">0</i><i style="width:6.36px">0</i><i style="width:3.64px">.</i><i style="width:6.36px">0</i><i style="width:6.36px">0</i></div>
<div style="left:995.00px;top:236px;line-height:13px;letter-spacing:0.0px;font-size:11px">$</div>
<div style="left:1082.56px;top:236px;line-height:13px;font-size:11px"><i style="width:6.36px">4</i><i style="width:3.64px">,</i><i style="width:6.36px">5</i><i style="width:6.36px">0</i><i style="width:6.36px">0</i><i style="width:3.64px">.</i><i style="width:6.36px">0</i><i style="width:6.36px">0</i></div>
<div style="left:1141.00px;top:236px;line-height:13px;letter-spacing:0.0px;font-size:11px">$</div>
<div style="left:1216.20px;top:236px;line-height:13px;font-size:11px"><i style="width:6.36px">2</i><i style="width:6.36px">5</i><i style="width:3.64px">,</i><i style="width:6.36px">0</i><i style="width:6.36px">0</i><i style="width:6.36px">0</i><i style="width:3.64px">.</i><i style="width:6.36px">0</i><i style="width:6.36px">0</i></div>
<div style="left:1281.00px;top:236px;line-height:13px;letter-spacing:0.0px;font-size:11px">$</div>
<div style="left:1389.73px;top:235px;line-height:13px;letter-spacing:0.0px;font-size:11px">-</div>
<div style="left:1419.00px;top:236px;line-height:13px;letter-spacing:0.0px;font-weight:bold;font-size:11px;-webkit-text-stroke:0.3px #000">$</div>
<div style="left:1434.51px;top:236px;line-height:13px;font-weight:bold;font-size:11px;-webkit-text-stroke:0.3px #000"><i style="width:7.11px">7</i><i style="width:7.11px">5</i><i style="width:3.61px">,</i><i style="width:7.11px">0</i><i style="width:7.11px">0</i><i style="width:7.11px">0</i><i style="width:3.61px">.</i><i style="width:7.11px">0</i><i style="width:7.11px">0</i></div>
<div style="left:16.00px;top:258px;line-height:13px;font-size:11px"><i style="width:6.84px">S</i><i style="width:6.86px">B</i><i style="width:6.98px">C</i><i style="width:6.98px">C</i><i style="width:3.52px"> </i><i style="width:6.98px">C</i><i style="width:6.01px">a</i><i style="width:4.27px">r</i><i style="width:5.96px">e</i><i style="width:5.96px">e</i><i style="width:4.27px">r</i><i style="width:3.52px"> </i><i style="width:6.84px">S</i><i style="width:5.92px">k</i><i style="width:2.74px">i</i><i style="width:2.74px">l</i><i style="width:2.74px">l</i><i style="width:5.21px">s</i><i style="width:3.52px"> </i><i style="width:4.21px">I</i><i style="width:6.33px">n</i><i style="width:5.21px">s</i><i style="width:3.94px">t</i><i style="width:2.74px">i</i><i style="width:3.94px">t</i><i style="width:6.33px">u</i><i style="width:3.94px">t</i><i style="width:5.96px">e</i><i style="width:4.54px">:</i><i style="width:3.52px"> </i><i style="width:4.55px">J</i><i style="width:6.01px">a</i><i style="width:2.74px">i</i><i style="width:2.74px">l</i></div>
<div style="left:305.00px;top:252px;line-height:13px;font-size:11px"><i style="width:6.84px">A</i><i style="width:6.23px">d</i><i style="width:6.33px">u</i><i style="width:2.74px">l</i><i style="width:3.94px">t</i><i style="width:3.52px"> </i><i style="width:6.32px">E</i><i style="width:6.23px">d</i><i style="width:6.33px">u</i><i style="width:5.21px">c</i><i style="width:6.01px">a</i><i style="width:3.94px">t</i><i style="width:2.74px">i</i><i style="width:6.07px">o</i><i style="width:6.33px">n</i><i style="width:3.52px"> </i><i style="width:4.54px">(</i><i style="width:6.84px">A</i><i style="width:6.86px">B</i><i style="width:6.32px">E</i><i style="width:3.64px">,</i><i style="width:3.52px"> </i><i style="width:6.84px">A</i><i style="width:6.84px">S</i><i style="width:6.32px">E</i><i style="width:3.64px">,</i><i style="width:3.52px"> </i><i style="width:6.86px">B</i><i style="width:6.01px">a</i><i style="width:5.21px">s</i><i style="width:2.74px">i</i><i style="width:5.21px">c</i></div>
<div style="left:305.00px;top:265px;line-height:13px;font-size:11px"><i style="width:6.84px">S</i><i style="width:5.92px">k</i><i style="width:2.74px">i</i><i style="width:2.74px">l</i><i style="width:2.74px">l</i><i style="width:5.21px">s</i><i style="width:4.54px">)</i></div>
<div style="left:499.00px;top:268px;line-height:13px;letter-spacing:0.0px;font-weight:bold;font-size:11px;-webkit-text-stroke:0.3px #000">$</div>
<div style="left:562.51px;top:268px;line-height:13px;font-weight:bold;font-size:11px;-webkit-text-stroke:0.3px #000"><i style="width:7.11px">4</i><i style="width:7.11px">5</i><i style="width:3.61px">,</i><i style="width:7.11px">0</i><i style="width:7.11px">0</i><i style="width:7.11px">0</i><i style="width:3.61px">.</i><i style="width:7.11px">0</i><i style="width:7.11px">0</i></div>
<div style="left:632.00px;top:268px;line-height:13px;letter-spacing:0.0px;font-size:11px">$</div>
<div style="left:693.20px;top:268px;line-height:13px;font-size:11px"><i style="width:6.36px">2</i><i style="width:6.36px">3</i><i style="width:3.64px">,</i><i style="width:6.36px">0</i><i style="width:6.36px">0</i><i style="width:6.36px">0</i><i style="width:3.64px">.</i><i style="width:6.36px">0</i><i style="width:6.36px">0</i></div>
<div style="left:758.00px;top:268px;line-height:13px;letter-spacing:0.0px;font-size:11px">$</div>
<div style="left:855.73px;top:267px;line-height:13px;letter-spacing:0.0px;font-size:11px">-</div>
<div style="left:885.00px;top:268px;line-height:13px;letter-spacing:0.0px;font-size:11px">$</div>
<div style="left:936.56px;top:268px;line-height:13px;font-size:11px"><i style="width:6.36px">7</i><i style="width:3.64px">,</i><i style="width:6.36px">0</i><i style="width:6.36px">0</i><i style="width:6.36px">0</i><i style="width:3.64px">.</i><i style="width:6.36px">0</i><i style="width:6.36px">0</i></div>
<div style="left:995.00px;top:268px;line-height:13px;letter-spacing:0.0px;font-size:11px">$</div>
<div style="left:1082.56px;top:268px;line-height:13px;font-size:11px"><i style="width:6.36px">3</i><i style="width:3.64px">,</i><i style="width:6.36px">5</i><i style="width:6.36px">0</i><i style="width:6.36px">0</i><i style="width:3.64px">.</i><i style="width:6.36px">0</i><i style="width:6.36px">0</i></div>
<div style="left:1141.00px;top:268px;line-height:13px;letter-spacing:0.0px;font-size:11px">$</div>
<div style="left:1222.56px;top:268px;line-height:13px;font-size:11px"><i style="width:6.36px">6</i><i style="width:3.64px">,</i><i style="width:6.36px">5</i><i style="width:6.36px">0</i><i style="width:6.36px">0</i><i style="width:3.64px">.</i><i style="width:6.36px">0</i><i style="width:6.36px">0</i></div>
<div style="left:1281.00px;top:268px;line-height:13px;letter-spacing:0.0px;font-size:11px">$</div>
<div style="left:1360.56px;top:268px;line-height:13px;font-size:11px"><i style="width:6.36px">5</i><i style="width:3.64px">,</i><i style="width:6.36px">0</i><i style="width:6.36px">0</i><i style="width:6.36px">0</i><i style="width:3.64px">.</i><i style="width:6.36px">0</i><i style="width:6.36px">0</i></div>
<div style="left:1419.00px;top:268px;line-height:13px;letter-spacing:0.0px;font-weight:bold;font-size:11px;-webkit-text-stroke:0.3px #000">$</div>
<div style="left:1434.51px;top:268px;line-height:13px;font-weight:bold;font-size:11px;-webkit-text-stroke:0.3px #000"><i style="width:7.11px">4</i><i style="width:7.11px">5</i><i style="width:3.61px">,</i><i style="width:7.11px">0</i><i style="width:7.11px">0</i><i style="width:7.11px">0</i><i style="width:3.61px">.</i><i style="width:7.11px">0</i><i style="width:7.11px">0</i></div>
<div style="left:16.00px;top:290px;line-height:13px;font-size:11px"><i style="width:6.84px">S</i><i style="width:6.86px">B</i><i style="width:6.98px">C</i><i style="width:6.98px">C</i><i style="width:3.52px"> </i><i style="width:4.54px">-</i><i style="width:3.52px"> </i><i style="width:6.98px">C</i><i style="width:6.01px">a</i><i style="width:4.27px">r</i><i style="width:5.96px">e</i><i style="width:5.96px">e</i><i style="width:4.27px">r</i><i style="width:3.52px"> </i><i style="width:6.84px">S</i><i style="width:5.92px">k</i><i style="width:2.74px">i</i><i style="width:2.74px">l</i><i style="width:2.74px">l</i><i style="width:5.21px">s</i><i style="width:3.52px"> </i><i style="width:4.21px">I</i><i style="width:6.33px">n</i><i style="width:5.21px">s</i><i style="width:3.94px">t</i><i style="width:2.74px">i</i><i style="width:3.94px">t</i><i style="width:6.33px">u</i><i style="width:3.94px">t</i><i style="width:5.96px">e</i></div>
<div style="left:305.00px;top:290px;line-height:13px;font-size:11px"><i style="width:6.84px">A</i><i style="width:6.23px">d</i><i style="width:6.33px">u</i><i style="width:2.74px">l</i><i style="width:3.94px">t</i><i style="width:5.21px">s</i><i style="width:3.52px"> </i><i style="width:2.74px">i</i><i style="width:6.33px">n</i><i style="width:3.52px"> </i><i style="width:3.94px">t</i><i style="width:6.33px">h</i><i style="width:5.96px">e</i><i style="width:3.52px"> </i><i style="width:9.89px">W</i><i style="width:6.07px">o</i><i style="width:4.27px">r</i><i style="width:5.92px">k</i><i style="width:3.52px">f</i><i style="width:6.07px">o</i><i style="width:4.27px">r</i><i style="width:5.21px">c</i><i style="width:5.96px">e</i></div>
<div style="left:499.00px;top:300px;line-height:13px;letter-spacing:0.0px;font-weight:bold;font-size:11px;-webkit-text-stroke:0.3px #000">$</div>
<div style="left:562.51px;top:300px;line-height:13px;font-weight:bold;font-size:11px;-webkit-text-stroke:0.3px #000"><i style="width:7.11px">5</i><i style="width:7.11px">0</i><i style="width:3.61px">,</i><i style="width:7.11px">0</i><i style="width:7.11px">0</i><i style="width:7.11px">0</i><i style="width:3.61px">.</i><i style="width:7.11px">0</i><i style="width:7.11px">0</i></div>
<div style="left:632.00px;top:300px;line-height:13px;letter-spacing:0.0px;font-size:11px">$</div>
<div style="left:693.20px;top:300px;line-height:13px;font-size:11px"><i style="width:6.36px">2</i><i style="width:6.36px">5</i><i style="width:3.64px">,</i><i style="width:6.36px">0</i><i style="width:6.36px">0</i><i style="width:6.36px">0</i><i style="width:3.64px">.</i><i style="width:6.36px">0</i><i style="width:6.36px">0</i></div>
<div style="left:758.00px;top:300px;line-height:13px;letter-spacing:0.0px;font-size:11px">$</div>
<div style="left:826.56px;top:300px;line-height:13px;font-size:11px"><i style="width:6.36px">6</i><i style="width:3.64px">,</i><i style="width:6.36px">0</i><i style="width:6.36px">0</i><i style="width:6.36px">0</i><i style="width:3.64px">.</i><i style="width:6.36px">0</i><i style="width:6.36px">0</i></div>
<div style="left:885.00px;top:300px;line-height:13px;letter-spacing:0.0px;font-size:11px">$</div>
<div style="left:936.56px;top:300px;line-height:13px;font-size:11px"><i style="width:6.36px">1</i><i style="width:3.64px">,</i><i style="width:6.36px">8</i><i style="width:6.36px">0</i><i style="width:6.36px">0</i><i style="width:3.64px">.</i><i style="width:6.36px">0</i><i style="width:6.36px">0</i></div>
<div style="left:995.00px;top:300px;line-height:13px;letter-spacing:0.0px;font-size:11px">$</div>
<div style="left:1082.56px;top:300px;line-height:13px;font-size:11px"><i style="width:6.36px">2</i><i style="width:3.64px">,</i><i style="width:6.36px">2</i><i style="width:6.36px">0</i><i style="width:6.36px">0</i><i style="width:3.64px">.</i><i style="width:6.36px">0</i><i style="width:6.36px">0</i></div>
<div style="left:1141.00px;top:300px;line-height:13px;letter-spacing:0.0px;font-size:11px">$</div>
<div style="left:1216.20px;top:300px;line-height:13px;font-size:11px"><i style="width:6.36px">1</i><i style="width:6.36px">5</i><i style="width:3.64px">,</i><i style="width:6.36px">0</i><i style="width:6.36px">0</i><i style="width:6.36px">0</i><i style="width:3.64px">.</i><i style="width:6.36px">0</i><i style="width:6.36px">0</i></div>
<div style="left:1281.00px;top:300px;line-height:13px;letter-spacing:0.0px;font-size:11px">$</div>
<div style="left:1389.73px;top:299px;line-height:13px;letter-spacing:0.0px;font-size:11px">-</div>
<div style="left:1419.00px;top:300px;line-height:13px;letter-spacing:0.0px;font-weight:bold;font-size:11px;-webkit-text-stroke:0.3px #000">$</div>
<div style="left:1434.51px;top:300px;line-height:13px;font-weight:bold;font-size:11px;-webkit-text-stroke:0.3px #000"><i style="width:7.11px">5</i><i style="width:7.11px">0</i><i style="width:3.61px">,</i><i style="width:7.11px">0</i><i style="width:7.11px">0</i><i style="width:7.11px">0</i><i style="width:3.61px">.</i><i style="width:7.11px">0</i><i style="width:7.11px">0</i></div>
<div style="left:16.00px;top:316px;line-height:13px;font-size:11px"><i style="width:6.93px">K</i><i style="width:6.95px">R</i><i style="width:6.84px">A</i><i style="width:3.52px"> </i><i style="width:6.98px">C</i><i style="width:6.07px">o</i><i style="width:4.27px">r</i><i style="width:6.23px">p</i><i style="width:6.07px">o</i><i style="width:4.27px">r</i><i style="width:6.01px">a</i><i style="width:3.94px">t</i><i style="width:2.74px">i</i><i style="width:6.07px">o</i><i style="width:6.33px">n</i><i style="width:4.54px">/</i><i style="width:3.52px"> </i><i style="width:9.89px">W</i><i style="width:6.07px">o</i><i style="width:4.27px">r</i><i style="width:5.92px">k</i><i style="width:3.52px">f</i><i style="width:6.07px">o</i><i style="width:4.27px">r</i><i style="width:5.21px">c</i><i style="width:5.96px">e</i><i style="width:3.52px"> </i><i style="width:6.84px">S</i><i style="width:5.92px">y</i><i style="width:5.21px">s</i><i style="width:3.94px">t</i><i style="width:5.96px">e</i><i style="width:9.73px">m</i><i style="width:3.52px"> </i><i style="width:7.48px">N</i><i style="width:6.01px">a</i><i style="width:5.92px">v</i><i style="width:2.74px">i</i><i style="width:6.23px">g</i><i style="width:6.01px">a</i><i style="width:3.94px">t</i><i style="width:6.07px">o</i><i style="width:4.27px">r</i><i style="width:3.52px"> </i><i style="width:3.52px">f</i><i style="width:6.07px">o</i><i style="width:4.27px">r</i><i style="width:3.52px"> </i><i style="width:7.87px">O</i><i style="width:2.74px">l</i><i style="width:6.23px">d</i><i style="width:5.96px">e</i><i style="width:4.27px">r</i></div>
<div style="left:16.00px;top:329px;line-height:13px;font-size:11px"><i style="width:6.84px">A</i><i style="width:6.23px">d</i><i style="width:6.33px">u</i><i style="width:2.74px">l</i><i style="width:3.94px">t</i><i style="width:5.21px">s</i><i style="width:3.52px"> </i><i style="width:6.01px">a</i><i style="width:6.33px">n</i><i style="width:6.23px">d</i><i style="width:3.52px"> </i><i style="width:5.57px">L</i><i style="width:6.07px">o</i><i style="width:6.33px">n</i><i style="width:6.23px">g</i><i style="width:4.54px">-</i><i style="width:6.16px">T</i><i style="width:5.96px">e</i><i style="width:4.27px">r</i><i style="width:9.73px">m</i><i style="width:3.52px"> </i><i style="width:7.32px">U</i><i style="width:6.33px">n</i><i style="width:5.96px">e</i><i style="width:9.73px">m</i><i style="width:6.23px">p</i><i style="width:2.74px">l</i><i style="width:6.07px">o</i><i style="width:5.92px">y</i><i style="width:5.96px">e</i><i style="width:6.23px">d</i></div>
<div style="left:305.00px;top:322px;line-height:13px;font-size:11px"><i style="width:6.84px">A</i><i style="width:6.23px">d</i><i style="width:6.33px">u</i><i style="width:2.74px">l</i><i style="width:3.94px">t</i><i style="width:5.21px">s</i><i style="width:3.52px"> </i><i style="width:2.74px">i</i><i style="width:6.33px">n</i><i style="width:3.52px"> </i><i style="width:3.94px">t</i><i style="width:6.33px">h</i><i style="width:5.96px">e</i><i style="width:3.52px"> </i><i style="width:9.89px">W</i><i style="width:6.07px">o</i><i style="width:4.27px">r</i><i style="width:5.92px">k</i><i style="width:3.52px">f</i><i style="width:6.07px">o</i><i style="width:4.27px">r</i><i style="width:5.21px">c</i><i style="width:5.96px">e</i></div>
<div style="left:499.00px;top:332px;line-height:13px;letter-spacing:0.0px;font-weight:bold;font-size:11px;-webkit-text-stroke:0.3px #000">$</div>
<div style="left:562.51px;top:332px;line-height:13px;font-weight:bold;font-size:11px;-webkit-text-stroke:0.3px #000"><i style="width:7.11px">5</i><i style="width:7.11px">0</i><i style="width:3.61px">,</i><i style="width:7.11px">0</i><i style="width:7.11px">0</i><i style="width:7.11px">0</i><i style="width:3.61px">.</i><i style="width:7.11px">0</i><i style="width:7.11px">0</i></div>
<div style="left:632.00px;top:332px;line-height:13px;letter-spacing:0.0px;font-size:11px">$</div>
<div style="left:728.73px;top:331px;line-height:13px;letter-spacing:0.0px;font-size:11px">-</div>
<div style="left:758.00px;top:332px;line-height:13px;letter-spacing:0.0px;font-size:11px">$</div>
<div style="left:855.73px;top:331px;line-height:13px;letter-spacing:0.0px;font-size:11px">-</div>
<div style="left:885.00px;top:332px;line-height:13px;letter-spacing:0.0px;font-size:11px">$</div>
<div style="left:965.73px;top:331px;line-height:13px;letter-spacing:0.0px;font-size:11px">-</div>
<div style="left:995.00px;top:332px;line-height:13px;letter-spacing:0.0px;font-size:11px">$</div>
<div style="left:1111.73px;top:331px;line-height:13px;letter-spacing:0.0px;font-size:11px">-</div>
<div style="left:1141.00px;top:332px;line-height:13px;letter-spacing:0.0px;font-size:11px">$</div>
<div style="left:1216.20px;top:332px;line-height:13px;font-size:11px"><i style="width:6.36px">5</i><i style="width:6.36px">0</i><i style="width:3.64px">,</i><i style="width:6.36px">0</i><i style="width:6.36px">0</i><i style="width:6.36px">0</i><i style="width:3.64px">.</i><i style="width:6.36px">0</i><i style="width:6.36px">0</i></div>
<div style="left:1281.00px;top:332px;line-height:13px;letter-spacing:0.0px;font-size:11px">$</div>
<div style="left:1389.73px;top:331px;line-height:13px;letter-spacing:0.0px;font-size:11px">-</div>
<div style="left:1419.00px;top:332px;line-height:13px;letter-spacing:0.0px;font-weight:bold;font-size:11px;-webkit-text-stroke:0.3px #000">$</div>
<div style="left:1434.51px;top:332px;line-height:13px;font-weight:bold;font-size:11px;-webkit-text-stroke:0.3px #000"><i style="width:7.11px">5</i><i style="width:7.11px">0</i><i style="width:3.61px">,</i><i style="width:7.11px">0</i><i style="width:7.11px">0</i><i style="width:7.11px">0</i><i style="width:3.61px">.</i><i style="width:7.11px">0</i><i style="width:7.11px">0</i></div>
<div style="left:16.00px;top:354px;line-height:13px;font-size:11px"><i style="width:6.84px">S</i><i style="width:6.86px">B</i><i style="width:3.52px"> </i><i style="width:6.03px">P</i><i style="width:6.33px">u</i><i style="width:6.23px">b</i><i style="width:2.74px">l</i><i style="width:2.74px">i</i><i style="width:5.21px">c</i><i style="width:3.52px"> </i><i style="width:5.57px">L</i><i style="width:2.74px">i</i><i style="width:6.23px">b</i><i style="width:4.27px">r</i><i style="width:6.01px">a</i><i style="width:4.27px">r</i><i style="width:5.92px">y</i><i style="width:4.54px">:</i><i style="width:3.52px"> </i><i style="width:6.98px">C</i><i style="width:6.07px">o</i><i style="width:9.73px">m</i><i style="width:9.73px">m</i><i style="width:6.33px">u</i><i style="width:6.33px">n</i><i style="width:2.74px">i</i><i style="width:3.94px">t</i><i style="width:5.92px">y</i><i style="width:3.52px"> </i><i style="width:6.86px">B</i><i style="width:4.27px">r</i><i style="width:2.74px">i</i><i style="width:6.23px">d</i><i style="width:6.23px">g</i><i style="width:5.96px">e</i><i style="width:5.21px">s</i><i style="width:4.54px">:</i><i style="width:3.52px"> </i><i style="width:7.48px">N</i><i style="width:5.96px">e</i><i style="width:5.96px">e</i><i style="width:6.23px">d</i><i style="width:5.21px">s</i></div>
<div style="left:16.00px;top:367px;line-height:13px;font-size:11px"><i style="width:6.84px">A</i><i style="width:5.21px">s</i><i style="width:5.21px">s</i><i style="width:5.96px">e</i><i style="width:5.21px">s</i><i style="width:5.21px">s</i><i style="width:9.73px">m</i><i style="width:5.96px">e</i><i style="width:6.33px">n</i><i style="width:3.94px">t</i><i style="width:3.52px"> </i><i style="width:6.01px">a</i><i style="width:6.33px">n</i><i style="width:6.23px">d</i><i style="width:3.52px"> </i><i style="width:6.03px">P</i><i style="width:2.74px">i</i><i style="width:2.74px">l</i><i style="width:6.07px">o</i><i style="width:3.94px">t</i><i style="width:3.52px"> </i><i style="width:3.52px">f</i><i style="width:6.07px">o</i><i style="width:4.27px">r</i><i style="width:3.52px"> </i><i style="width:6.84px">S</i><i style="width:5.96px">e</i><i style="width:4.27px">r</i><i style="width:5.92px">v</i><i style="width:2.74px">i</i><i style="width:5.21px">c</i><i style="width:5.96px">e</i><i style="width:3.52px"> </i><i style="width:6.03px">P</i><i style="width:4.27px">r</i><i style="width:6.07px">o</i><i style="width:5.92px">v</i><i style="width:2.74px">i</i><i style="width:6.23px">d</i><i style="width:5.96px">e</i><i style="width:4.27px">r</i><i style="width:3.52px"> </i><i style="width:6.98px">C</i><i style="width:6.07px">o</i><i style="width:6.07px">o</i><i style="width:4.27px">r</i><i style="width:6.23px">d</i><i style="width:2.74px">i</i><i style="width:6.33px">n</i><i style="width:6.01px">a</i><i style="width:3.94px">t</i><i style="width:2.74px">i</i><i style="width:6.07px">o</i><i style="width:6.33px">n</i></div>
<div style="left:16.00px;top:380px;line-height:13px;font-size:11px"><i style="width:6.01px">a</i><i style="width:6.33px">n</i><i style="width:6.23px">d</i><i style="width:3.52px"> </i><i style="width:6.98px">C</i><i style="width:4.27px">r</i><i style="width:6.07px">o</i><i style="width:5.21px">s</i><i style="width:5.21px">s</i><i style="width:3.52px"> </i><i style="width:6.16px">T</i><i style="width:4.27px">r</i><i style="width:6.01px">a</i><i style="width:2.74px">i</i><i style="width:6.33px">n</i><i style="width:2.74px">i</i><i style="width:6.33px">n</i><i style="width:6.23px">g</i></div>
<div style="left:305.00px;top:347px;line-height:13px;font-size:11px"><i style="width:6.84px">A</i><i style="width:6.23px">d</i><i style="width:6.33px">u</i><i style="width:2.74px">l</i><i style="width:3.94px">t</i><i style="width:3.52px"> </i><i style="width:6.32px">E</i><i style="width:6.23px">d</i><i style="width:6.33px">u</i><i style="width:5.21px">c</i><i style="width:6.01px">a</i><i style="width:3.94px">t</i><i style="width:2.74px">i</i><i style="width:6.07px">o</i><i style="width:6.33px">n</i><i style="width:3.52px"> </i><i style="width:4.54px">(</i><i style="width:6.84px">A</i><i style="width:6.86px">B</i><i style="width:6.32px">E</i><i style="width:3.64px">,</i><i style="width:3.52px"> </i><i style="width:6.84px">A</i><i style="width:6.84px">S</i><i style="width:6.32px">E</i><i style="width:3.64px">,</i><i style="width:3.52px"> </i><i style="width:6.86px">B</i><i style="width:6.01px">a</i><i style="width:5.21px">s</i><i style="width:2.74px">i</i><i style="width:5.21px">c</i></div>
<div style="left:305.00px;top:360px;line-height:13px;font-size:11px"><i style="width:6.84px">S</i><i style="width:5.92px">k</i><i style="width:2.74px">i</i><i style="width:2.74px">l</i><i style="width:2.74px">l</i><i style="width:5.21px">s</i><i style="width:4.54px">)</i><i style="width:3.64px">,</i><i style="width:3.52px"> </i><i style="width:6.32px">E</i><i style="width:6.33px">n</i><i style="width:6.23px">g</i><i style="width:2.74px">l</i><i style="width:2.74px">i</i><i style="width:5.21px">s</i><i style="width:6.33px">h</i><i style="width:3.52px"> </i><i style="width:6.01px">a</i><i style="width:5.21px">s</i><i style="width:3.52px"> </i><i style="width:6.01px">a</i><i style="width:3.52px"> </i><i style="width:6.84px">S</i><i style="width:5.96px">e</i><i style="width:5.21px">c</i><i style="width:6.07px">o</i><i style="width:6.33px">n</i><i style="width:6.23px">d</i></div>
<div style="left:305.00px;top:373px;line-height:13px;font-size:11px"><i style="width:5.57px">L</i><i style="width:6.01px">a</i><i style="width:6.33px">n</i><i style="width:6.23px">g</i><i style="width:6.33px">u</i><i style="width:6.01px">a</i><i style="width:6.23px">g</i><i style="width:5.96px">e</i><i style="width:4.54px">/</i><i style="width:5.57px">L</i><i style="width:2.74px">i</i><i style="width:3.94px">t</i><i style="width:5.96px">e</i><i style="width:4.27px">r</i><i style="width:6.01px">a</i><i style="width:5.21px">c</i><i style="width:5.92px">y</i><i style="width:3.64px">,</i><i style="width:3.52px"> </i><i style="width:6.84px">A</i><i style="width:6.23px">d</i><i style="width:6.33px">u</i><i style="width:2.74px">l</i><i style="width:3.94px">t</i><i style="width:5.21px">s</i><i style="width:3.52px"> </i><i style="width:2.74px">i</i><i style="width:6.33px">n</i><i style="width:3.52px"> </i><i style="width:3.94px">t</i><i style="width:6.33px">h</i><i style="width:5.96px">e</i></div>
<div style="left:305.00px;top:386px;line-height:13px;font-size:11px"><i style="width:9.89px">W</i><i style="width:6.07px">o</i><i style="width:4.27px">r</i><i style="width:5.92px">k</i><i style="width:3.52px">f</i><i style="width:6.07px">o</i><i style="width:4.27px">r</i><i style="width:5.21px">c</i><i style="width:5.96px">e</i><i style="width:3.64px">,</i><i style="width:3.52px"> </i><i style="width:6.84px">A</i><i style="width:6.23px">d</i><i style="width:6.33px">u</i><i style="width:2.74px">l</i><i style="width:3.94px">t</i><i style="width:5.21px">s</i><i style="width:3.52px"> </i><i style="width:8.18px">w</i><i style="width:2.74px">i</i><i style="width:3.94px">t</i><i style="width:6.33px">h</i><i style="width:3.52px"> </i><i style="width:7.71px">D</i><i style="width:2.74px">i</i><i style="width:5.21px">s</i><i style="width:6.01px">a</i><i style="width:6.23px">b</i><i style="width:2.74px">i</i><i style="width:2.74px">l</i><i style="width:2.74px">i</i><i style="width:3.94px">t</i><i style="width:2.74px">i</i><i style="width:5.96px">e</i><i style="width:5.21px">s</i></div>
<div style="left:632.00px;top:389px;line-height:13px;letter-spacing:0.0px;font-size:11px">$</div>
<div style="left:728.73px;top:388px;line-height:13px;letter-spacing:0.0px;font-size:11px">-</div>
<div style="left:758.00px;top:389px;line-height:13px;letter-spacing:0.0px;font-size:11px">$</div>
<div style="left:855.73px;top:388px;line-height:13px;letter-spacing:0.0px;font-size:11px">-</div>
<div style="left:885.00px;top:389px;line-height:13px;letter-spacing:0.0px;font-size:11px">$</div>
<div style="left:965.73px;top:388px;line-height:13px;letter-spacing:0.0px;font-size:11px">-</div>
<div style="left:995.00px;top:389px;line-height:13px;letter-spacing:0.0px;font-size:11px">$</div>
<div style="left:1076.20px;top:389px;line-height:13px;font-size:11px"><i style="width:6.36px">1</i><i style="width:6.36px">0</i><i style="width:3.64px">,</i><i style="width:6.36px">0</i><i style="width:6.36px">0</i><i style="width:6.36px">0</i><i style="width:3.64px">.</i><i style="width:6.36px">0</i><i style="width:6.36px">0</i></div>
<div style="left:1141.00px;top:389px;line-height:13px;letter-spacing:0.0px;font-size:11px">$</div>
<div style="left:1222.56px;top:389px;line-height:13px;font-size:11px"><i style="width:6.36px">1</i><i style="width:3.64px">,</i><i style="width:6.36px">4</i><i style="width:6.36px">0</i><i style="width:6.36px">0</i><i style="width:3.64px">.</i><i style="width:6.36px">0</i><i style="width:6.36px">0</i></div>
<div style="left:1281.00px;top:389px;line-height:13px;letter-spacing:0.0px;font-size:11px">$</div>
<div style="left:1389.73px;top:388px;line-height:13px;letter-spacing:0.0px;font-size:11px">-</div>
<div style="left:1419.00px;top:389px;line-height:13px;letter-spacing:0.0px;font-weight:bold;font-size:11px;-webkit-text-stroke:0.3px #000">$</div>
<div style="left:1434.51px;top:389px;line-height:13px;font-weight:bold;font-size:11px;-webkit-text-stroke:0.3px #000"><i style="width:7.11px">1</i><i style="width:7.11px">1</i><i style="width:3.61px">,</i><i style="width:7.11px">4</i><i style="width:7.11px">0</i><i style="width:7.11px">0</i><i style="width:3.61px">.</i><i style="width:7.11px">0</i><i style="width:7.11px">0</i></div>
<div style="left:16.00px;top:417px;line-height:13px;font-size:11px"><i style="width:6.84px">S</i><i style="width:6.86px">B</i><i style="width:3.52px"> </i><i style="width:6.03px">P</i><i style="width:6.33px">u</i><i style="width:6.23px">b</i><i style="width:2.74px">l</i><i style="width:2.74px">i</i><i style="width:5.21px">c</i><i style="width:3.52px"> </i><i style="width:5.57px">L</i><i style="width:2.74px">i</i><i style="width:6.23px">b</i><i style="width:4.27px">r</i><i style="width:6.01px">a</i><i style="width:4.27px">r</i><i style="width:5.92px">y</i><i style="width:4.54px">:</i><i style="width:3.52px"> </i><i style="width:6.84px">S</i><i style="width:6.33px">u</i><i style="width:6.23px">p</i><i style="width:6.23px">p</i><i style="width:6.07px">o</i><i style="width:4.27px">r</i><i style="width:3.94px">t</i><i style="width:2.74px">i</i><i style="width:6.33px">n</i><i style="width:6.23px">g</i><i style="width:3.52px"> </i><i style="width:6.86px">B</i><i style="width:6.01px">a</i><i style="width:5.21px">s</i><i style="width:2.74px">i</i><i style="width:5.21px">c</i><i style="width:3.52px"> </i><i style="width:6.95px">R</i><i style="width:5.96px">e</i><i style="width:6.01px">a</i><i style="width:6.23px">d</i><i style="width:2.74px">i</i><i style="width:6.33px">n</i><i style="width:6.23px">g</i><i style="width:3.52px"> </i><i style="width:6.01px">a</i><i style="width:6.33px">n</i><i style="width:6.23px">d</i></div>
<div style="left:16.00px;top:430px;line-height:13px;font-size:11px"><i style="width:5.57px">L</i><i style="width:2.74px">i</i><i style="width:3.94px">t</i><i style="width:5.96px">e</i><i style="width:4.27px">r</i><i style="width:6.01px">a</i><i style="width:5.21px">c</i><i style="width:5.92px">y</i><i style="width:3.52px"> </i><i style="width:4.21px">I</i><i style="width:6.33px">n</i><i style="width:5.21px">s</i><i style="width:3.94px">t</i><i style="width:4.27px">r</i><i style="width:6.33px">u</i><i style="width:5.21px">c</i><i style="width:3.94px">t</i><i style="width:2.74px">i</i><i style="width:6.07px">o</i><i style="width:6.33px">n</i><i style="width:4.54px">:</i><i style="width:3.52px"> </i><i style="width:7.87px">O</i><i style="width:6.23px">p</i><i style="width:5.96px">e</i><i style="width:6.33px">n</i><i style="width:2.74px">i</i><i style="width:6.33px">n</i><i style="width:6.23px">g</i><i style="width:3.52px"> </i><i style="width:6.03px">P</i><i style="width:6.01px">a</i><i style="width:3.94px">t</i><i style="width:6.33px">h</i><i style="width:8.18px">w</i><i style="width:6.01px">a</i><i style="width:5.92px">y</i><i style="width:5.21px">s</i><i style="width:3.52px"> </i><i style="width:3.94px">t</i><i style="width:6.07px">o</i><i style="width:3.52px"> </i><i style="width:6.84px">S</i><i style="width:6.33px">u</i><i style="width:5.21px">c</i><i style="width:5.21px">c</i><i style="width:5.96px">e</i><i style="width:5.21px">s</i><i style="width:5.21px">s</i></div>
<div style="left:305.00px;top:404px;line-height:13px;font-size:11px"><i style="width:6.84px">A</i><i style="width:6.23px">d</i><i style="width:6.33px">u</i><i style="width:2.74px">l</i><i style="width:3.94px">t</i><i style="width:3.52px"> </i><i style="width:6.32px">E</i><i style="width:6.23px">d</i><i style="width:6.33px">u</i><i style="width:5.21px">c</i><i style="width:6.01px">a</i><i style="width:3.94px">t</i><i style="width:2.74px">i</i><i style="width:6.07px">o</i><i style="width:6.33px">n</i><i style="width:3.52px"> </i><i style="width:4.54px">(</i><i style="width:6.84px">A</i><i style="width:6.86px">B</i><i style="width:6.32px">E</i><i style="width:3.64px">,</i><i style="width:3.52px"> </i><i style="width:6.84px">A</i><i style="width:6.84px">S</i><i style="width:6.32px">E</i><i style="width:3.64px">,</i><i style="width:3.52px"> </i><i style="width:6.86px">B</i><i style="width:6.01px">a</i><i style="width:5.21px">s</i><i style="width:2.74px">i</i><i style="width:5.21px">c</i></div>
<div style="left:305.00px;top:417px;line-height:13px;font-size:11px"><i style="width:6.84px">S</i><i style="width:5.92px">k</i><i style="width:2.74px">i</i><i style="width:2.74px">l</i><i style="width:2.74px">l</i><i style="width:5.21px">s</i><i style="width:4.54px">)</i><i style="width:3.64px">,</i><i style="width:3.52px"> </i><i style="width:6.32px">E</i><i style="width:6.33px">n</i><i style="width:6.23px">g</i><i style="width:2.74px">l</i><i style="width:2.74px">i</i><i style="width:5.21px">s</i><i style="width:6.33px">h</i><i style="width:3.52px"> </i><i style="width:6.01px">a</i><i style="width:5.21px">s</i><i style="width:3.52px"> </i><i style="width:6.01px">a</i><i style="width:3.52px"> </i><i style="width:6.84px">S</i><i style="width:5.96px">e</i><i style="width:5.21px">c</i><i style="width:6.07px">o</i><i style="width:6.33px">n</i><i style="width:6.23px">d</i></div>
<div style="left:305.00px;top:430px;line-height:13px;font-size:11px"><i style="width:5.57px">L</i><i style="width:6.01px">a</i><i style="width:6.33px">n</i><i style="width:6.23px">g</i><i style="width:6.33px">u</i><i style="width:6.01px">a</i><i style="width:6.23px">g</i><i style="width:5.96px">e</i><i style="width:4.54px">/</i><i style="width:5.57px">L</i><i style="width:2.74px">i</i><i style="width:3.94px">t</i><i style="width:5.96px">e</i><i style="width:4.27px">r</i><i style="width:6.01px">a</i><i style="width:5.21px">c</i><i style="width:5.92px">y</i><i style="width:3.64px">,</i><i style="width:3.52px"> </i><i style="width:6.84px">A</i><i style="width:6.23px">d</i><i style="width:6.33px">u</i><i style="width:2.74px">l</i><i style="width:3.94px">t</i><i style="width:5.21px">s</i><i style="width:3.52px"> </i><i style="width:8.18px">w</i><i style="width:2.74px">i</i><i style="width:3.94px">t</i><i style="width:6.33px">h</i></div>
<div style="left:305.00px;top:443px;line-height:13px;font-size:11px"><i style="width:7.71px">D</i><i style="width:2.74px">i</i><i style="width:5.21px">s</i><i style="width:6.01px">a</i><i style="width:6.23px">b</i><i style="width:2.74px">i</i><i style="width:2.74px">l</i><i style="width:2.74px">i</i><i style="width:3.94px">t</i><i style="width:2.74px">i</i><i style="width:5.96px">e</i><i style="width:5.21px">s</i></div>
<div style="left:632.00px;top:446px;line-height:13px;letter-spacing:0.0px;font-size:11px">$</div>
<div style="left:728.73px;top:445px;line-height:13px;letter-spacing:0.0px;font-size:11px">-</div>
<div style="left:758.00px;top:446px;line-height:13px;letter-spacing:0.0px;font-size:11px">$</div>
<div style="left:855.73px;top:445px;line-height:13px;letter-spacing:0.0px;font-size:11px">-</div>
<div style="left:885.00px;top:446px;line-height:13px;letter-spacing:0.0px;font-size:11px">$</div>
<div style="left:965.73px;top:445px;line-height:13px;letter-spacing:0.0px;font-size:11px">-</div>
<div style="left:995.00px;top:446px;line-height:13px;letter-spacing:0.0px;font-size:11px">$</div>
<div style="left:1082.56px;top:446px;line-height:13px;font-size:11px"><i style="width:6.36px">8</i><i style="width:3.64px">,</i><i style="width:6.36px">1</i><i style="width:6.36px">0</i><i style="width:6.36px">0</i><i style="width:3.64px">.</i><i style="width:6.36px">0</i><i style="width:6.36px">0</i></div>
<div style="left:1141.00px;top:446px;line-height:13px;letter-spacing:0.0px;font-size:11px">$</div>
<div style="left:1222.56px;top:446px;line-height:13px;font-size:11px"><i style="width:6.36px">5</i><i style="width:3.64px">,</i><i style="width:6.36px">0</i><i style="width:6.36px">0</i><i style="width:6.36px">0</i><i style="width:3.64px">.</i><i style="width:6.36px">0</i><i style="width:6.36px">0</i></div>
<div style="left:1281.00px;top:446px;line-height:13px;letter-spacing:0.0px;font-size:11px">$</div>
<div style="left:1389.73px;top:445px;line-height:13px;letter-spacing:0.0px;font-size:11px">-</div>
<div style="left:1419.00px;top:446px;line-height:13px;letter-spacing:0.0px;font-weight:bold;font-size:11px;-webkit-text-stroke:0.3px #000">$</div>
<div style="left:1434.51px;top:446px;line-height:13px;font-weight:bold;font-size:11px;-webkit-text-stroke:0.3px #000"><i style="width:7.11px">1</i><i style="width:7.11px">3</i><i style="width:3.61px">,</i><i style="width:7.11px">1</i><i style="width:7.11px">0</i><i style="width:7.11px">0</i><i style="width:3.61px">.</i><i style="width:7.11px">0</i><i style="width:7.11px">0</i></div>
<div style="left:16.00px;top:468px;line-height:13px;font-size:11px"><i style="width:6.84px">S</i><i style="width:6.86px">B</i><i style="width:3.52px"> </i><i style="width:6.03px">P</i><i style="width:6.33px">u</i><i style="width:6.23px">b</i><i style="width:2.74px">l</i><i style="width:2.74px">i</i><i style="width:5.21px">c</i><i style="width:3.52px"> </i><i style="width:5.57px">L</i><i style="width:2.74px">i</i><i style="width:6.23px">b</i><i style="width:4.27px">r</i><i style="width:6.01px">a</i><i style="width:4.27px">r</i><i style="width:5.92px">y</i><i style="width:4.54px">:</i><i style="width:3.52px"> </i><i style="width:7.71px">D</i><i style="width:2.74px">i</i><i style="width:6.23px">g</i><i style="width:2.74px">i</i><i style="width:3.94px">t</i><i style="width:6.01px">a</i><i style="width:2.74px">l</i><i style="width:3.52px"> </i><i style="width:5.57px">L</i><i style="width:2.74px">i</i><i style="width:3.94px">t</i><i style="width:5.96px">e</i><i style="width:4.27px">r</i><i style="width:6.01px">a</i><i style="width:5.21px">c</i><i style="width:5.92px">y</i><i style="width:3.52px"> </i><i style="width:7.51px">H</i><i style="width:6.33px">u</i><i style="width:6.23px">b</i></div>
<div style="left:305.00px;top:468px;line-height:13px;font-size:11px"><i style="width:6.84px">A</i><i style="width:6.23px">d</i><i style="width:6.33px">u</i><i style="width:2.74px">l</i><i style="width:3.94px">t</i><i style="width:5.21px">s</i><i style="width:3.52px"> </i><i style="width:2.74px">i</i><i style="width:6.33px">n</i><i style="width:3.52px"> </i><i style="width:3.94px">t</i><i style="width:6.33px">h</i><i style="width:5.96px">e</i><i style="width:3.52px"> </i><i style="width:9.89px">W</i><i style="width:6.07px">o</i><i style="width:4.27px">r</i><i style="width:5.92px">k</i><i style="width:3.52px">f</i><i style="width:6.07px">o</i><i style="width:4.27px">r</i><i style="width:5.21px">c</i><i style="width:5.96px">e</i></div>
<div style="left:632.00px;top:478px;line-height:13px;letter-spacing:0.0px;font-size:11px">$</div>
<div style="left:728.73px;top:477px;line-height:13px;letter-spacing:0.0px;font-size:11px">-</div>
<div style="left:758.00px;top:478px;line-height:13px;letter-spacing:0.0px;font-size:11px">$</div>
<div style="left:855.73px;top:477px;line-height:13px;letter-spacing:0.0px;font-size:11px">-</div>
<div style="left:885.00px;top:478px;line-height:13px;letter-spacing:0.0px;font-size:11px">$</div>
<div style="left:965.73px;top:477px;line-height:13px;letter-spacing:0.0px;font-size:11px">-</div>
<div style="left:995.00px;top:478px;line-height:13px;letter-spacing:0.0px;font-size:11px">$</div>
<div style="left:1082.56px;top:478px;line-height:13px;font-size:11px"><i style="width:6.36px">6</i><i style="width:3.64px">,</i><i style="width:6.36px">0</i><i style="width:6.36px">0</i><i style="width:6.36px">0</i><i style="width:3.64px">.</i><i style="width:6.36px">0</i><i style="width:6.36px">0</i></div>
<div style="left:1141.00px;top:478px;line-height:13px;letter-spacing:0.0px;font-size:11px">$</div>
<div style="left:1216.20px;top:478px;line-height:13px;font-size:11px"><i style="width:6.36px">1</i><i style="width:6.36px">8</i><i style="width:3.64px">,</i><i style="width:6.36px">0</i><i style="width:6.36px">0</i><i style="width:6.36px">0</i><i style="width:3.64px">.</i><i style="width:6.36px">0</i><i style="width:6.36px">0</i></div>
<div style="left:1281.00px;top:478px;line-height:13px;letter-spacing:0.0px;font-size:11px">$</div>
<div style="left:1360.56px;top:478px;line-height:13px;font-size:11px"><i style="width:6.36px">1</i><i style="width:3.64px">,</i><i style="width:6.36px">5</i><i style="width:6.36px">0</i><i style="width:6.36px">0</i><i style="width:3.64px">.</i><i style="width:6.36px">0</i><i style="width:6.36px">0</i></div>
<div style="left:1419.00px;top:478px;line-height:13px;letter-spacing:0.0px;font-weight:bold;font-size:11px;-webkit-text-stroke:0.3px #000">$</div>
<div style="left:1434.51px;top:478px;line-height:13px;font-weight:bold;font-size:11px;-webkit-text-stroke:0.3px #000"><i style="width:7.11px">2</i><i style="width:7.11px">5</i><i style="width:3.61px">,</i><i style="width:7.11px">5</i><i style="width:7.11px">0</i><i style="width:7.11px">0</i><i style="width:3.61px">.</i><i style="width:7.11px">0</i><i style="width:7.11px">0</i></div>
<div style="left:499.00px;top:411px;line-height:13px;letter-spacing:0.0px;font-weight:bold;font-size:11px;-webkit-text-stroke:0.3px #000">$</div>
<div style="left:562.51px;top:411px;line-height:13px;font-weight:bold;font-size:11px;-webkit-text-stroke:0.3px #000"><i style="width:7.11px">5</i><i style="width:7.11px">0</i><i style="width:3.61px">,</i><i style="width:7.11px">0</i><i style="width:7.11px">0</i><i style="width:7.11px">0</i><i style="width:3.61px">.</i><i style="width:7.11px">0</i><i style="width:7.11px">0</i></div>
<div style="left:443.20px;top:509px;line-height:13px;font-weight:bold;font-size:11px;-webkit-text-stroke:0.3px #000"><i style="width:7.10px">S</i><i style="width:7.12px">u</i><i style="width:6.99px">b</i><i style="width:4.56px">t</i><i style="width:6.87px">o</i><i style="width:4.56px">t</i><i style="width:6.68px">a</i><i style="width:3.42px">l</i></div>
<div style="left:499.00px;top:509px;line-height:13px;letter-spacing:0.0px;font-weight:bold;font-size:11px;-webkit-text-stroke:0.3px #000">$</div>
<div style="left:555.40px;top:509px;line-height:13px;font-weight:bold;font-size:11px;-webkit-text-stroke:0.3px #000"><i style="width:7.11px">3</i><i style="width:7.11px">8</i><i style="width:7.11px">5</i><i style="width:3.61px">,</i><i style="width:7.11px">0</i><i style="width:7.11px">0</i><i style="width:7.11px">0</i><i style="width:3.61px">.</i><i style="width:7.11px">0</i><i style="width:7.11px">0</i></div>
<div style="left:632.00px;top:509px;line-height:13px;letter-spacing:0.0px;font-weight:bold;font-size:11px;-webkit-text-stroke:0.3px #000">$</div>
<div style="left:681.40px;top:509px;line-height:13px;font-weight:bold;font-size:11px;-webkit-text-stroke:0.3px #000"><i style="width:7.11px">1</i><i style="width:7.11px">2</i><i style="width:7.11px">0</i><i style="width:3.61px">,</i><i style="width:7.11px">0</i><i style="width:7.11px">0</i><i style="width:7.11px">0</i><i style="width:3.61px">.</i><i style="width:7.11px">0</i><i style="width:7.11px">0</i></div>
<div style="left:758.00px;top:509px;line-height:13px;letter-spacing:0.0px;font-weight:bold;font-size:11px;-webkit-text-stroke:0.3px #000">$</div>
<div style="left:815.51px;top:509px;line-height:13px;font-weight:bold;font-size:11px;-webkit-text-stroke:0.3px #000"><i style="width:7.11px">2</i><i style="width:7.11px">8</i><i style="width:3.61px">,</i><i style="width:7.11px">0</i><i style="width:7.11px">0</i><i style="width:7.11px">0</i><i style="width:3.61px">.</i><i style="width:7.11px">0</i><i style="width:7.11px">0</i></div>
<div style="left:885.00px;top:509px;line-height:13px;letter-spacing:0.0px;font-weight:bold;font-size:11px;-webkit-text-stroke:0.3px #000">$</div>
<div style="left:925.51px;top:509px;line-height:13px;font-weight:bold;font-size:11px;-webkit-text-stroke:0.3px #000"><i style="width:7.11px">2</i><i style="width:7.11px">5</i><i style="width:3.61px">,</i><i style="width:7.11px">9</i><i style="width:7.11px">0</i><i style="width:7.11px">0</i><i style="width:3.61px">.</i><i style="width:7.11px">0</i><i style="width:7.11px">0</i></div>
<div style="left:995.00px;top:509px;line-height:13px;letter-spacing:0.0px;font-weight:bold;font-size:11px;-webkit-text-stroke:0.3px #000">$</div>
<div style="left:1071.51px;top:509px;line-height:13px;font-weight:bold;font-size:11px;-webkit-text-stroke:0.3px #000"><i style="width:7.11px">6</i><i style="width:7.11px">6</i><i style="width:3.61px">,</i><i style="width:7.11px">3</i><i style="width:7.11px">0</i><i style="width:7.11px">0</i><i style="width:3.61px">.</i><i style="width:7.11px">0</i><i style="width:7.11px">0</i></div>
<div style="left:1141.00px;top:509px;line-height:13px;letter-spacing:0.0px;font-weight:bold;font-size:11px;-webkit-text-stroke:0.3px #000">$</div>
<div style="left:1204.40px;top:509px;line-height:13px;font-weight:bold;font-size:11px;-webkit-text-stroke:0.3px #000"><i style="width:7.11px">1</i><i style="width:7.11px">3</i><i style="width:7.11px">4</i><i style="width:3.61px">,</i><i style="width:7.11px">9</i><i style="width:7.11px">0</i><i style="width:7.11px">0</i><i style="width:3.61px">.</i><i style="width:7.11px">0</i><i style="width:7.11px">0</i></div>
<div style="left:1281.00px;top:509px;line-height:13px;letter-spacing:0.0px;font-weight:bold;font-size:11px;-webkit-text-stroke:0.3px #000">$</div>
<div style="left:1356.62px;top:509px;line-height:13px;font-weight:bold;font-size:11px;-webkit-text-stroke:0.3px #000"><i style="width:7.11px">9</i><i style="width:3.61px">,</i><i style="width:7.11px">9</i><i style="width:7.11px">0</i><i style="width:7.11px">0</i><i style="width:3.61px">.</i><i style="width:7.11px">0</i><i style="width:7.11px">0</i></div>
<div style="left:1419.00px;top:509px;line-height:13px;letter-spacing:0.0px;font-weight:bold;font-size:11px;-webkit-text-stroke:0.3px #000">$</div>
<div style="left:1427.40px;top:509px;line-height:13px;font-weight:bold;font-size:11px;-webkit-text-stroke:0.3px #000"><i style="width:7.11px">3</i><i style="width:7.11px">8</i><i style="width:7.11px">5</i><i style="width:3.61px">,</i><i style="width:7.11px">0</i><i style="width:7.11px">0</i><i style="width:7.11px">0</i><i style="width:3.61px">.</i><i style="width:7.11px">0</i><i style="width:7.11px">0</i></div>
<div style="left:141.78px;top:542px;line-height:13px;font-weight:bold;font-size:11px;-webkit-text-stroke:0.3px #000"><i style="width:7.11px">2</i><i style="width:7.11px">0</i><i style="width:7.11px">1</i><i style="width:7.11px">7</i><i style="width:3.42px"> </i><i style="width:4.80px">-</i><i style="width:3.42px"> </i><i style="width:7.11px">2</i><i style="width:7.11px">0</i><i style="width:7.11px">1</i><i style="width:7.11px">8</i><i style="width:3.42px"> </i><i style="width:7.76px">A</i><i style="width:7.12px">n</i><i style="width:7.12px">n</i><i style="width:7.12px">u</i><i style="width:6.68px">a</i><i style="width:3.42px">l</i><i style="width:3.42px"> </i><i style="width:7.33px">P</i><i style="width:3.42px">l</i><i style="width:6.68px">a</i><i style="width:7.12px">n</i><i style="width:3.42px"> </i><i style="width:7.33px">P</i><i style="width:4.97px">r</i><i style="width:3.42px">i</i><i style="width:10.58px">m</i><i style="width:6.68px">a</i><i style="width:4.97px">r</i><i style="width:6.51px">y</i><i style="width:3.42px"> </i><i style="width:8.11px">G</i><i style="width:6.87px">o</i><i style="width:6.68px">a</i><i style="width:3.42px">l</i><i style="width:5.93px">s</i></div>
<div style="left:16.00px;top:570px;line-height:13px;font-size:11px"><i style="width:6.84px">S</i><i style="width:6.33px">h</i><i style="width:6.07px">o</i><i style="width:4.27px">r</i><i style="width:3.94px">t</i><i style="width:3.52px"> </i><i style="width:6.16px">T</i><i style="width:5.96px">e</i><i style="width:4.27px">r</i><i style="width:9.73px">m</i><i style="width:3.52px"> </i><i style="width:6.84px">V</i><i style="width:6.07px">o</i><i style="width:5.21px">c</i><i style="width:6.01px">a</i><i style="width:3.94px">t</i><i style="width:2.74px">i</i><i style="width:6.07px">o</i><i style="width:6.33px">n</i><i style="width:6.01px">a</i><i style="width:2.74px">l</i><i style="width:3.52px"> </i><i style="width:6.16px">T</i><i style="width:4.27px">r</i><i style="width:6.01px">a</i><i style="width:2.74px">i</i><i style="width:6.33px">n</i><i style="width:2.74px">i</i><i style="width:6.33px">n</i><i style="width:6.23px">g</i><i style="width:3.52px"> </i><i style="width:2.74px">i</i><i style="width:6.33px">n</i><i style="width:3.52px"> </i><i style="width:4.21px">I</i><i style="width:6.33px">n</i><i style="width:6.23px">d</i><i style="width:6.33px">u</i><i style="width:5.21px">s</i><i style="width:3.94px">t</i><i style="width:4.27px">r</i><i style="width:2.74px">i</i><i style="width:6.01px">a</i><i style="width:2.74px">l</i><i style="width:3.52px"> </i><i style="width:6.16px">T</i><i style="width:5.96px">e</i><i style="width:5.21px">c</i><i style="width:6.33px">h</i><i style="width:6.33px">n</i><i style="width:6.07px">o</i><i style="width:2.74px">l</i><i style="width:6.07px">o</i><i style="width:6.23px">g</i><i style="width:2.74px">i</i><i style="width:5.96px">e</i><i style="width:5.21px">s</i><i style="width:3.52px"> </i><i style="width:4.54px">(</i><i style="width:6.98px">C</i><i style="width:6.16px">T</i><i style="width:6.32px">E</i><i style="width:4.54px">)</i></div>
<div style="left:499.00px;top:578px;line-height:13px;letter-spacing:0.0px;font-weight:bold;font-size:11px;-webkit-text-stroke:0.3px #000">$</div>
<div style="left:569.62px;top:578px;line-height:13px;font-weight:bold;font-size:11px;-webkit-text-stroke:0.3px #000"><i style="width:7.11px">8</i><i style="width:3.61px">,</i><i style="width:7.11px">0</i><i style="width:7.11px">0</i><i style="width:7.11px">0</i><i style="width:3.61px">.</i><i style="width:7.11px">0</i><i style="width:7.11px">0</i></div>
<div style="left:16.00px;top:597px;line-height:13px;font-size:11px"><i style="width:5.57px">L</i><i style="width:5.96px">e</i><i style="width:6.01px">a</i><i style="width:4.27px">r</i><i style="width:6.33px">n</i><i style="width:2.74px">i</i><i style="width:6.33px">n</i><i style="width:6.23px">g</i><i style="width:3.52px"> </i><i style="width:6.84px">A</i><i style="width:5.21px">s</i><i style="width:5.21px">s</i><i style="width:2.74px">i</i><i style="width:5.21px">s</i><i style="width:3.94px">t</i><i style="width:6.01px">a</i><i style="width:6.33px">n</i><i style="width:5.21px">c</i><i style="width:5.96px">e</i><i style="width:3.52px"> </i><i style="width:7.27px">&amp;</i><i style="width:3.52px"> </i><i style="width:6.84px">S</i><i style="width:6.33px">u</i><i style="width:6.23px">p</i><i style="width:5.96px">e</i><i style="width:4.27px">r</i><i style="width:5.92px">v</i><i style="width:2.74px">i</i><i style="width:5.21px">s</i><i style="width:5.96px">e</i><i style="width:6.23px">d</i><i style="width:3.52px"> </i><i style="width:6.16px">T</i><i style="width:6.33px">u</i><i style="width:3.94px">t</i><i style="width:6.07px">o</i><i style="width:4.27px">r</i><i style="width:2.74px">i</i><i style="width:6.33px">n</i><i style="width:6.23px">g</i><i style="width:3.52px"> </i><i style="width:4.54px">(</i><i style="width:8.43px">M</i><i style="width:6.01px">a</i><i style="width:3.94px">t</i><i style="width:6.33px">h</i><i style="width:3.52px"> </i><i style="width:6.01px">a</i><i style="width:6.33px">n</i><i style="width:6.23px">d</i><i style="width:3.52px"> </i><i style="width:6.32px">E</i><i style="width:6.33px">n</i><i style="width:6.23px">g</i><i style="width:2.74px">l</i><i style="width:2.74px">i</i><i style="width:5.21px">s</i><i style="width:6.33px">h</i><i style="width:3.52px"> </i><i style="width:6.23px">p</i><i style="width:4.27px">r</i><i style="width:5.96px">e</i><i style="width:6.23px">p</i><i style="width:4.54px">)</i></div>
<div style="left:499.00px;top:605px;line-height:13px;letter-spacing:0.0px;font-weight:bold;font-size:11px;-webkit-text-stroke:0.3px #000">$</div>
<div style="left:569.62px;top:605px;line-height:13px;font-weight:bold;font-size:11px;-webkit-text-stroke:0.3px #000"><i style="width:7.11px">8</i><i style="width:3.61px">,</i><i style="width:7.11px">0</i><i style="width:7.11px">0</i><i style="width:7.11px">0</i><i style="width:3.61px">.</i><i style="width:7.11px">0</i><i style="width:7.11px">0</i></div>
<div style="left:16.00px;top:624px;line-height:13px;font-size:11px"><i style="width:4.55px">J</i><i style="width:6.07px">o</i><i style="width:6.23px">b</i><i style="width:3.52px"> </i><i style="width:6.03px">P</i><i style="width:2.74px">l</i><i style="width:6.01px">a</i><i style="width:5.21px">c</i><i style="width:5.96px">e</i><i style="width:9.73px">m</i><i style="width:5.96px">e</i><i style="width:6.33px">n</i><i style="width:3.94px">t</i><i style="width:3.52px"> </i><i style="width:6.84px">A</i><i style="width:5.21px">s</i><i style="width:5.21px">s</i><i style="width:2.74px">i</i><i style="width:5.21px">s</i><i style="width:3.94px">t</i><i style="width:6.01px">a</i><i style="width:6.33px">n</i><i style="width:5.21px">c</i><i style="width:5.96px">e</i><i style="width:3.52px"> </i><i style="width:7.27px">&amp;</i><i style="width:3.52px"> </i><i style="width:4.21px">I</i><i style="width:6.33px">n</i><i style="width:3.94px">t</i><i style="width:5.96px">e</i><i style="width:4.27px">r</i><i style="width:6.33px">n</i><i style="width:5.21px">s</i><i style="width:6.33px">h</i><i style="width:2.74px">i</i><i style="width:6.23px">p</i><i style="width:3.52px"> </i><i style="width:6.03px">P</i><i style="width:4.27px">r</i><i style="width:6.07px">o</i><i style="width:6.23px">g</i><i style="width:4.27px">r</i><i style="width:6.01px">a</i><i style="width:9.73px">m</i></div>
<div style="left:499.00px;top:632px;line-height:13px;letter-spacing:0.0px;font-weight:bold;font-size:11px;-webkit-text-stroke:0.3px #000">$</div>
<div style="left:562.51px;top:632px;line-height:13px;font-weight:bold;font-size:11px;-webkit-text-stroke:0.3px #000"><i style="width:7.11px">3</i><i style="width:7.11px">0</i><i style="width:3.61px">,</i><i style="width:7.11px">0</i><i style="width:7.11px">0</i><i style="width:7.11px">0</i><i style="width:3.61px">.</i><i style="width:7.11px">0</i><i style="width:7.11px">0</i></div>
<div style="left:16.00px;top:651px;line-height:13px;font-size:11px"><i style="width:7.71px">D</i><i style="width:6.01px">a</i><i style="width:3.94px">t</i><i style="width:6.01px">a</i><i style="width:3.52px"> </i><i style="width:5.21px">c</i><i style="width:6.07px">o</i><i style="width:2.74px">l</i><i style="width:2.74px">l</i><i style="width:5.96px">e</i><i style="width:5.21px">c</i><i style="width:3.94px">t</i><i style="width:2.74px">i</i><i style="width:6.07px">o</i><i style="width:6.33px">n</i><i style="width:3.52px"> </i><i style="width:6.01px">a</i><i style="width:6.33px">n</i><i style="width:6.23px">d</i><i style="width:3.52px"> </i><i style="width:6.01px">a</i><i style="width:6.33px">n</i><i style="width:6.01px">a</i><i style="width:2.74px">l</i><i style="width:5.92px">y</i><i style="width:3.94px">t</i><i style="width:2.74px">i</i><i style="width:5.21px">c</i><i style="width:5.21px">s</i></div>
<div style="left:499.00px;top:659px;line-height:13px;letter-spacing:0.0px;font-weight:bold;font-size:11px;-webkit-text-stroke:0.3px #000">$</div>
<div style="left:555.40px;top:659px;line-height:13px;font-weight:bold;font-size:11px;-webkit-text-stroke:0.3px #000"><i style="width:7.11px">1</i><i style="width:7.11px">1</i><i style="width:7.11px">0</i><i style="width:3.61px">,</i><i style="width:7.11px">0</i><i style="width:7.11px">0</i><i style="width:7.11px">0</i><i style="width:3.61px">.</i><i style="width:7.11px">0</i><i style="width:7.11px">0</i></div>
<div style="left:16.00px;top:678px;line-height:13px;font-size:11px"><i style="width:6.32px">E</i><i style="width:6.33px">n</i><i style="width:5.92px">v</i><i style="width:2.74px">i</i><i style="width:4.27px">r</i><i style="width:6.07px">o</i><i style="width:6.33px">n</i><i style="width:9.73px">m</i><i style="width:5.96px">e</i><i style="width:6.33px">n</i><i style="width:3.94px">t</i><i style="width:6.01px">a</i><i style="width:2.74px">l</i><i style="width:3.52px"> </i><i style="width:6.84px">S</i><i style="width:5.21px">c</i><i style="width:6.01px">a</i><i style="width:6.33px">n</i><i style="width:3.52px"> </i><i style="width:3.52px">f</i><i style="width:6.07px">o</i><i style="width:4.27px">r</i><i style="width:3.52px"> </i><i style="width:6.84px">A</i><i style="width:6.23px">d</i><i style="width:6.33px">u</i><i style="width:2.74px">l</i><i style="width:3.94px">t</i><i style="width:3.52px"> </i><i style="width:6.32px">E</i><i style="width:6.23px">d</i><i style="width:6.33px">u</i><i style="width:5.21px">c</i><i style="width:6.01px">a</i><i style="width:3.94px">t</i><i style="width:2.74px">i</i><i style="width:6.07px">o</i><i style="width:6.33px">n</i><i style="width:3.52px"> </i><i style="width:3.94px">t</i><i style="width:6.07px">o</i><i style="width:3.52px"> </i><i style="width:6.23px">d</i><i style="width:5.96px">e</i><i style="width:3.94px">t</i><i style="width:5.96px">e</i><i style="width:4.27px">r</i><i style="width:9.73px">m</i><i style="width:2.74px">i</i><i style="width:6.33px">n</i><i style="width:5.96px">e</i><i style="width:3.52px"> </i><i style="width:6.23px">g</i><i style="width:6.01px">a</i><i style="width:6.23px">p</i><i style="width:5.21px">s</i></div>
<div style="left:499.00px;top:686px;line-height:13px;letter-spacing:0.0px;font-weight:bold;font-size:11px;-webkit-text-stroke:0.3px #000">$</div>
<div style="left:562.51px;top:686px;line-height:13px;font-weight:bold;font-size:11px;-webkit-text-stroke:0.3px #000"><i style="width:7.11px">3</i><i style="width:7.11px">2</i><i style="width:3.61px">,</i><i style="width:7.11px">0</i><i style="width:7.11px">0</i><i style="width:7.11px">0</i><i style="width:3.61px">.</i><i style="width:7.11px">0</i><i style="width:7.11px">0</i></div>
<div style="left:16.00px;top:705px;line-height:13px;font-size:11px"><i style="width:6.84px">S</i><i style="width:3.94px">t</i><i style="width:6.33px">u</i><i style="width:6.23px">d</i><i style="width:5.96px">e</i><i style="width:6.33px">n</i><i style="width:3.94px">t</i><i style="width:3.52px"> </i><i style="width:6.84px">S</i><i style="width:6.33px">u</i><i style="width:6.23px">p</i><i style="width:6.23px">p</i><i style="width:6.07px">o</i><i style="width:4.27px">r</i><i style="width:3.94px">t</i><i style="width:3.52px"> </i><i style="width:6.84px">S</i><i style="width:5.96px">e</i><i style="width:4.27px">r</i><i style="width:5.92px">v</i><i style="width:2.74px">i</i><i style="width:5.21px">c</i><i style="width:5.96px">e</i><i style="width:5.21px">s</i></div>
<div style="left:499.00px;top:713px;line-height:13px;letter-spacing:0.0px;font-weight:bold;font-size:11px;-webkit-text-stroke:0.3px #000">$</div>
<div style="left:562.51px;top:713px;line-height:13px;font-weight:bold;font-size:11px;-webkit-text-stroke:0.3px #000"><i style="width:7.11px">2</i><i style="width:7.11px">5</i><i style="width:3.61px">,</i><i style="width:7.11px">0</i><i style="width:7.11px">0</i><i style="width:7.11px">0</i><i style="width:3.61px">.</i><i style="width:7.11px">0</i><i style="width:7.11px">0</i></div>
<div style="left:16.00px;top:729px;line-height:13px;font-size:11px"><i style="width:8.43px">M</i><i style="width:6.01px">a</i><i style="width:4.27px">r</i><i style="width:5.92px">k</i><i style="width:5.96px">e</i><i style="width:3.94px">t</i><i style="width:2.74px">i</i><i style="width:6.33px">n</i><i style="width:6.23px">g</i><i style="width:3.64px">,</i><i style="width:3.52px"> </i><i style="width:6.16px">T</i><i style="width:4.27px">r</i><i style="width:6.01px">a</i><i style="width:5.92px">v</i><i style="width:5.96px">e</i><i style="width:2.74px">l</i><i style="width:4.54px">/</i><i style="width:6.03px">P</i><i style="width:4.27px">r</i><i style="width:6.07px">o</i><i style="width:3.52px">f</i><i style="width:5.96px">e</i><i style="width:5.21px">s</i><i style="width:5.21px">s</i><i style="width:2.74px">i</i><i style="width:6.07px">o</i><i style="width:6.33px">n</i><i style="width:6.01px">a</i><i style="width:2.74px">l</i><i style="width:3.52px"> </i><i style="width:7.71px">D</i><i style="width:5.96px">e</i><i style="width:5.92px">v</i><i style="width:5.96px">e</i><i style="width:2.74px">l</i><i style="width:6.07px">o</i><i style="width:6.23px">p</i><i style="width:9.73px">m</i><i style="width:5.96px">e</i><i style="width:6.33px">n</i><i style="width:3.94px">t</i><i style="width:3.64px">,</i><i style="width:3.52px"> </i><i style="width:6.98px">C</i><i style="width:6.07px">o</i><i style="width:6.33px">n</i><i style="width:5.21px">s</i><i style="width:6.33px">u</i><i style="width:2.74px">l</i><i style="width:3.94px">t</i><i style="width:6.01px">a</i><i style="width:6.33px">n</i><i style="width:3.94px">t</i><i style="width:5.21px">s</i><i style="width:3.64px">,</i><i style="width:3.52px"> </i><i style="width:6.98px">C</i><i style="width:6.07px">o</i><i style="width:9.73px">m</i><i style="width:6.23px">p</i><i style="width:6.33px">u</i><i style="width:3.94px">t</i><i style="width:5.96px">e</i><i style="width:4.27px">r</i><i style="width:3.52px"> </i><i style="width:6.84px">S</i><i style="width:6.07px">o</i><i style="width:3.52px">f</i><i style="width:3.94px">t</i><i style="width:8.18px">w</i><i style="width:6.01px">a</i><i style="width:4.27px">r</i><i style="width:5.96px">e</i><i style="width:3.52px"> </i><i style="width:6.01px">a</i><i style="width:6.33px">n</i><i style="width:6.23px">d</i><i style="width:3.52px"> </i><i style="width:7.51px">H</i><i style="width:6.01px">a</i><i style="width:4.27px">r</i><i style="width:6.23px">d</i><i style="width:8.18px">w</i><i style="width:6.01px">a</i><i style="width:4.27px">r</i><i style="width:5.96px">e</i><i style="width:3.64px">,</i></div>
<div style="left:16.00px;top:742px;line-height:13px;font-size:11px"><i style="width:6.98px">C</i><i style="width:6.01px">a</i><i style="width:6.23px">p</i><i style="width:2.74px">i</i><i style="width:3.94px">t</i><i style="width:6.01px">a</i><i style="width:2.74px">l</i><i style="width:3.52px"> </i><i style="width:7.87px">O</i><i style="width:6.33px">u</i><i style="width:3.94px">t</i><i style="width:2.74px">l</i><i style="width:6.01px">a</i><i style="width:5.92px">y</i></div>
<div style="left:499.00px;top:747px;line-height:13px;letter-spacing:0.0px;font-weight:bold;font-size:11px;-webkit-text-stroke:0.3px #000">$</div>
<div style="left:562.51px;top:747px;line-height:13px;font-weight:bold;font-size:11px;-webkit-text-stroke:0.3px #000"><i style="width:7.11px">6</i><i style="width:7.11px">5</i><i style="width:3.61px">,</i><i style="width:7.11px">0</i><i style="width:7.11px">0</i><i style="width:7.11px">0</i><i style="width:3.61px">.</i><i style="width:7.11px">0</i><i style="width:7.11px">0</i></div>
<div style="left:16.00px;top:766px;line-height:13px;font-size:11px"><i style="width:6.84px">A</i><i style="width:6.32px">E</i><i style="width:6.86px">B</i><i style="width:7.75px">G</i><i style="width:3.52px"> </i><i style="width:6.98px">C</i><i style="width:6.07px">o</i><i style="width:6.07px">o</i><i style="width:4.27px">r</i><i style="width:6.23px">d</i><i style="width:2.74px">i</i><i style="width:6.33px">n</i><i style="width:6.01px">a</i><i style="width:3.94px">t</i><i style="width:6.07px">o</i><i style="width:4.27px">r</i><i style="width:3.52px"> </i><i style="width:4.54px">(</i><i style="width:2.74px">i</i><i style="width:6.33px">n</i><i style="width:5.21px">c</i><i style="width:2.74px">l</i><i style="width:6.33px">u</i><i style="width:6.23px">d</i><i style="width:5.96px">e</i><i style="width:5.21px">s</i><i style="width:3.52px"> </i><i style="width:6.36px">3</i><i style="width:6.36px">0</i><i style="width:4.54px">-</i><i style="width:6.36px">3</i><i style="width:6.36px">5</i><i style="width:10.76px">%</i><i style="width:3.52px"> </i><i style="width:3.52px">f</i><i style="width:6.07px">o</i><i style="width:4.27px">r</i><i style="width:3.52px"> </i><i style="width:6.23px">b</i><i style="width:5.96px">e</i><i style="width:6.33px">n</i><i style="width:5.96px">e</i><i style="width:3.52px">f</i><i style="width:2.74px">i</i><i style="width:3.94px">t</i><i style="width:5.21px">s</i><i style="width:4.54px">)</i></div>
<div style="left:499.00px;top:774px;line-height:13px;letter-spacing:0.0px;font-weight:bold;font-size:11px;-webkit-text-stroke:0.3px #000">$</div>
<div style="left:555.40px;top:774px;line-height:13px;font-weight:bold;font-size:11px;-webkit-text-stroke:0.3px #000"><i style="width:7.11px">1</i><i style="width:7.11px">1</i><i style="width:7.11px">0</i><i style="width:3.61px">,</i><i style="width:7.11px">0</i><i style="width:7.11px">0</i><i style="width:7.11px">0</i><i style="width:3.61px">.</i><i style="width:7.11px">0</i><i style="width:7.11px">0</i></div>
<div style="left:443.20px;top:805px;line-height:13px;font-weight:bold;font-size:11px;-webkit-text-stroke:0.3px #000"><i style="width:7.10px">S</i><i style="width:7.12px">u</i><i style="width:6.99px">b</i><i style="width:4.56px">t</i><i style="width:6.87px">o</i><i style="width:4.56px">t</i><i style="width:6.68px">a</i><i style="width:3.42px">l</i></div>
<div style="left:499.00px;top:805px;line-height:13px;letter-spacing:0.0px;font-weight:bold;font-size:11px;-webkit-text-stroke:0.3px #000">$</div>
<div style="left:555.40px;top:805px;line-height:13px;font-weight:bold;font-size:11px;-webkit-text-stroke:0.3px #000"><i style="width:7.11px">3</i><i style="width:7.11px">8</i><i style="width:7.11px">8</i><i style="width:3.61px">,</i><i style="width:7.11px">0</i><i style="width:7.11px">0</i><i style="width:7.11px">0</i><i style="width:3.61px">.</i><i style="width:7.11px">0</i><i style="width:7.11px">0</i></div>
<div style="left:454.23px;top:851px;line-height:13px;font-weight:bold;font-size:11px;-webkit-text-stroke:0.3px #000"><i style="width:6.82px">T</i><i style="width:8.50px">O</i><i style="width:6.82px">T</i><i style="width:7.76px">A</i><i style="width:6.37px">L</i></div>
<div style="left:499.00px;top:851px;line-height:13px;letter-spacing:0.0px;font-weight:bold;font-size:11px;-webkit-text-stroke:0.3px #000">$</div>
<div style="left:555.40px;top:851px;line-height:13px;font-weight:bold;font-size:11px;-webkit-text-stroke:0.3px #000"><i style="width:7.11px">7</i><i style="width:7.11px">7</i><i style="width:7.11px">3</i><i style="width:3.61px">,</i><i style="width:7.11px">0</i><i style="width:7.11px">0</i><i style="width:7.11px">0</i><i style="width:3.61px">.</i><i style="width:7.11px">0</i><i style="width:7.11px">0</i></div>
</body></html>
